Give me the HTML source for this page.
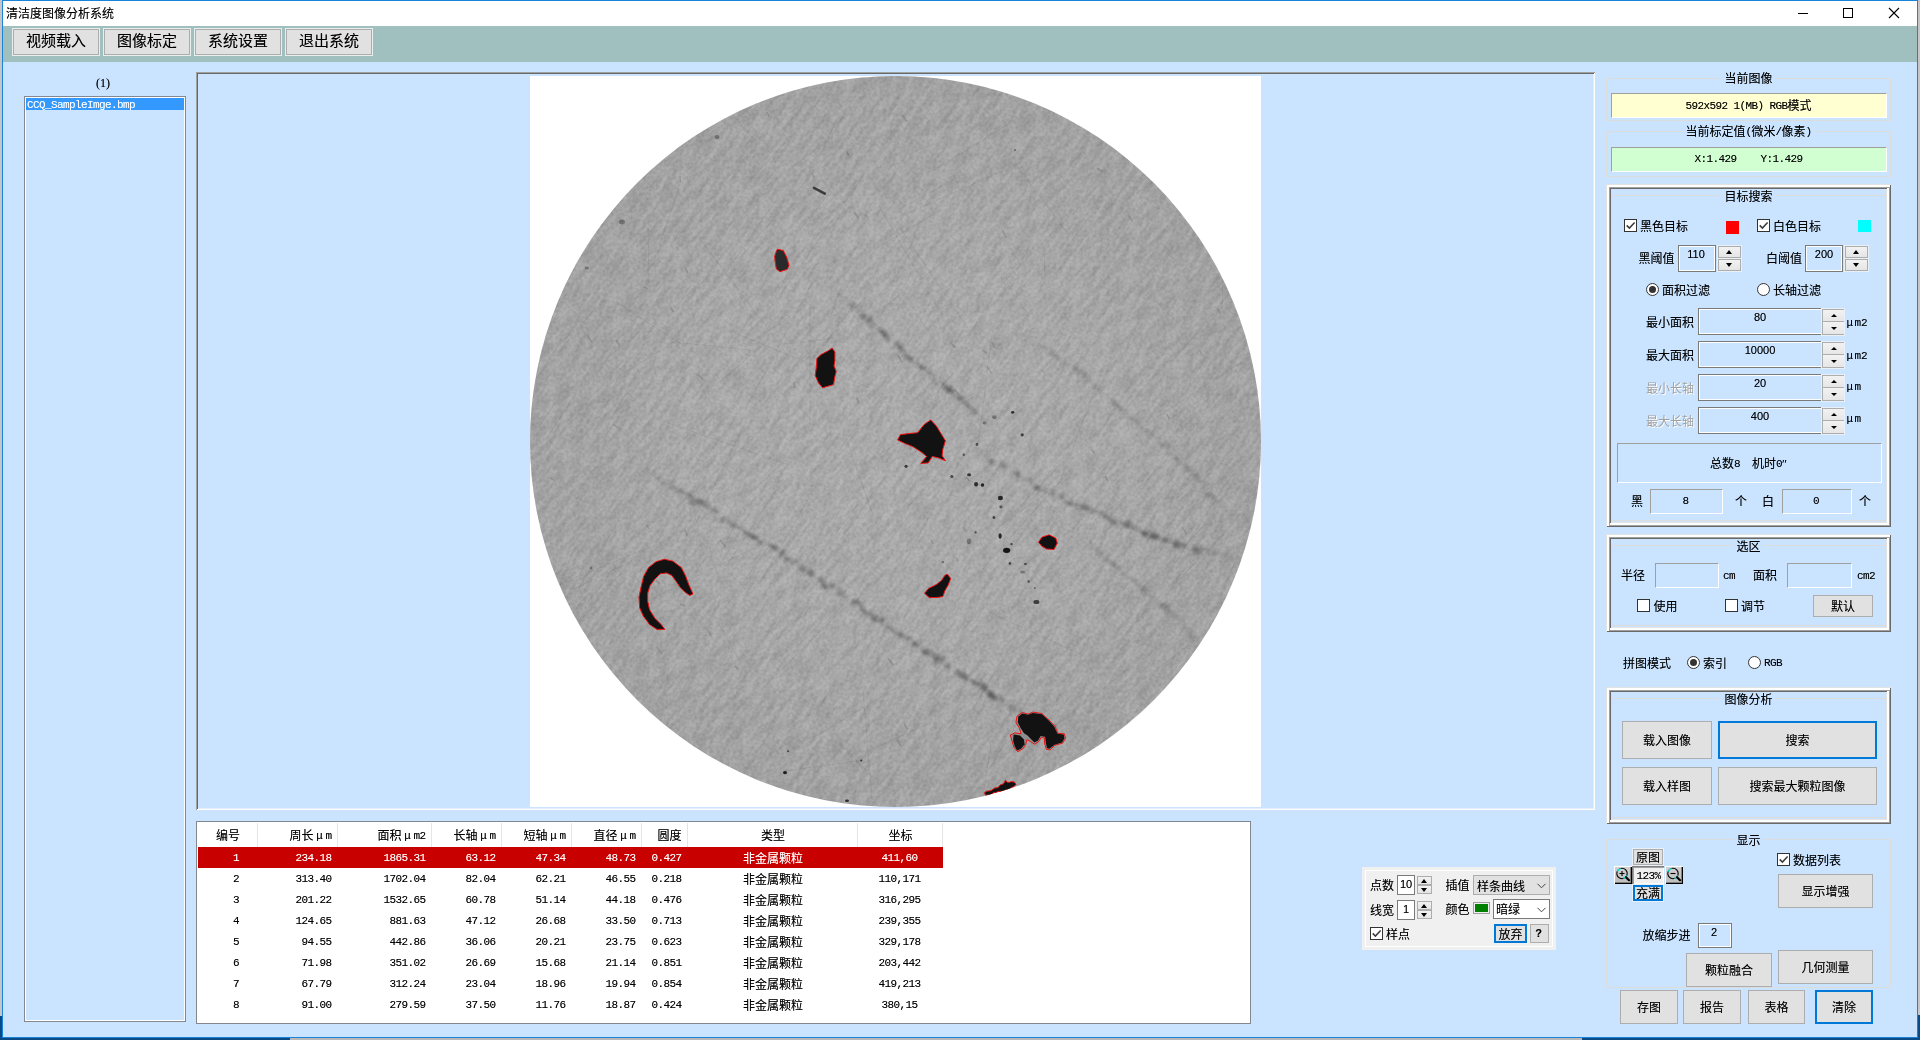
<!DOCTYPE html><html lang="zh"><head><meta charset="utf-8"><title>清洁度图像分析系统</title><style>
html,body{margin:0;padding:0}
body{width:1920px;height:1040px;overflow:hidden;position:relative;background:#cae4ff;
 font-family:"Liberation Serif","Noto Sans CJK SC",serif;font-size:12px;color:#000;text-shadow:0 0 0 rgba(0,0,0,.45)}
div{position:absolute;box-sizing:border-box}
svg{position:absolute;overflow:visible}
.t{white-space:nowrap}
.m{font-family:"Liberation Mono","Noto Sans CJK SC",monospace;font-size:11px;letter-spacing:-0.6px}
.s{font-family:"Liberation Sans","Noto Sans CJK SC",sans-serif;font-size:11px}
span.m,span.s{position:relative;top:-1px}
.w{color:#fff;text-shadow:0 0 0 rgba(255,255,255,.45)}
.dis{color:#a0a0a0;text-shadow:1px 1px 0 #fff}
.btn{background:#e1e1e1;border:1px solid #adadad}
.btnf{background:#e1e1e1;border:2px solid #0078d7}
.tb{background:#e1e1e1;border:1px solid #adadad;box-shadow:0 0 0 1px #e9efef}
.edit{border:1px solid #7a7a7a;box-shadow:inset 0 0 0 1px #fff}
.sunk{border:1px solid;border-color:#a0a0a0 #fff #fff #a0a0a0}
.gb{border:1px solid #dcdcdc}
.cap{background:#cae4ff}
.bevel{box-shadow:inset 1px 1px 0 0 #e3e3e3,inset -1px -1px 0 0 #696969,inset 3px 3px 0 0 #fff,inset -2px -2px 0 0 #a0a0a0,inset 4px 4px 0 0 #a0a0a0,inset -4px -4px 0 0 #fff,inset 5px 5px 0 0 #696969,inset -5px -5px 0 0 #e3e3e3}
.cb{width:13px;height:13px;background:#fff;border:1px solid #333}
.rb{width:13px;height:13px;background:#fff;border:1px solid #333;border-radius:50%}
.rb.on:after{content:"";position:absolute;left:2px;top:2px;width:7px;height:7px;border-radius:50%;background:#333}
.sp{background:linear-gradient(#f2f2f2,#e5e5e5);border:1px solid #adadad;box-shadow:0 0 0 1px #e8f0f8}
.au:after{content:"";position:absolute;left:50%;top:50%;margin:-2px 0 0 -3.5px;border-left:3.5px solid transparent;border-right:3.5px solid transparent;border-bottom:4px solid #000}
.ad:after{content:"";position:absolute;left:50%;top:50%;margin:-2px 0 0 -3.5px;border-left:3.5px solid transparent;border-right:3.5px solid transparent;border-top:4px solid #000}

.sf{border:1px solid #adadad;border-right:none;box-shadow:0 0 0 1px #e8f0f8;background:#adadad}
.sh{background:linear-gradient(#f2f2f2,#e6e6e6);left:0;width:100%}
.au2:after{content:"";position:absolute;left:50%;top:50%;margin:-2px 0 0 -3px;border-left:3px solid transparent;border-right:3px solid transparent;border-bottom:3px solid #000}
.ad2:after{content:"";position:absolute;left:50%;top:50%;margin:-1px 0 0 -3px;border-left:3px solid transparent;border-right:3px solid transparent;border-top:3px solid #000}
</style></head><body><div style="left:0;top:0;width:1920px;height:1040px;will-change:transform">
<div class="" style="left:0px;top:0px;width:1920px;height:1040px;background:#0a4a86"></div>
<div class="" style="left:0px;top:0px;width:2px;height:1016px;background:#c8c4c8"></div>
<div class="" style="left:1918px;top:0px;width:2px;height:1015px;background:#c8c4c8"></div>
<div class="" style="left:290px;top:1038px;width:1292px;height:2px;background:#b9b9b9"></div>
<div class="" style="left:2px;top:0px;width:1916px;height:1038px;background:#1883d7"></div>
<div class="" style="left:3px;top:1px;width:1914px;height:1036px;background:#cae4ff"></div>
<div class="" style="left:3px;top:1px;width:1914px;height:25px;background:#fff"></div>
<div class="t " style="left:6px;top:6px;line-height:16px;height:16px;">清洁度图像分析系统</div>
<svg width="120" height="26" viewBox="0 0 120 26" style="left:1790px;top:0"><path d="M8 13.5H18" stroke="#000" stroke-width="1" fill="none"/><rect x="53.5" y="8.5" width="9" height="9" fill="none" stroke="#000"/><path d="M99 8L109 18M109 8L99 18" stroke="#000" stroke-width="1.1" fill="none"/></svg>
<div class="" style="left:3px;top:26px;width:1914px;height:36px;background:#a0bfbf"></div>
<div class="tb" style="left:13px;top:29px;width:86px;height:26px;"></div>
<div class="t " style="left:13px;width:86px;text-align:center;top:31px;line-height:20px;height:20px;font-size:15px">视频载入</div>
<div class="tb" style="left:104px;top:29px;width:86px;height:26px;"></div>
<div class="t " style="left:104px;width:86px;text-align:center;top:31px;line-height:20px;height:20px;font-size:15px">图像标定</div>
<div class="tb" style="left:195px;top:29px;width:86px;height:26px;"></div>
<div class="t " style="left:195px;width:86px;text-align:center;top:31px;line-height:20px;height:20px;font-size:15px">系统设置</div>
<div class="tb" style="left:286px;top:29px;width:86px;height:26px;"></div>
<div class="t " style="left:286px;width:86px;text-align:center;top:31px;line-height:20px;height:20px;font-size:15px">退出系统</div>
<div class="t l" style="left:73px;width:60px;text-align:center;top:75px;line-height:16px;height:16px;">(1)</div>
<div class="" style="left:24px;top:96px;width:162px;height:926px;border:1px solid #828790;box-shadow:inset 0 0 0 1px #fff"></div>
<div class="" style="left:26px;top:98px;width:158px;height:12px;background:#3399ff"></div>
<div class="t m w" style="left:27px;top:97px;line-height:16px;height:16px;">CCQ_SampleImge.bmp</div>
<svg width="731" height="731" viewBox="530 76 731 731" style="left:530px;top:76px">
<defs><radialGradient id="rg" cx="0.5" cy="0.5" r="0.5"><stop offset="0" stop-color="#ababab"/><stop offset="0.6" stop-color="#a8a8a8"/><stop offset="1" stop-color="#a1a1a1"/></radialGradient><clipPath id="cc"><circle cx="895.5" cy="441.5" r="365.5"/></clipPath><filter id="nz" x="0" y="0" width="1" height="1" color-interpolation-filters="sRGB"><feTurbulence type="fractalNoise" baseFrequency="0.045 0.2" numOctaves="3" seed="3"/><feColorMatrix type="matrix" values="1.7 0 0 0 -0.20  1.7 0 0 0 -0.20  1.7 0 0 0 -0.20  0 0 0 0 1"/></filter><filter id="nz2" x="0" y="0" width="1" height="1" color-interpolation-filters="sRGB"><feTurbulence type="fractalNoise" baseFrequency="0.3" numOctaves="2" seed="8"/><feColorMatrix type="matrix" values="1.7 0 0 0 -0.20  1.7 0 0 0 -0.20  1.7 0 0 0 -0.20  0 0 0 0 1"/></filter><filter id="bl" x="-0.2" y="-0.2" width="1.4" height="1.4"><feGaussianBlur stdDeviation="1.6"/></filter><filter id="b1" x="-0.5" y="-0.5" width="2" height="2"><feGaussianBlur stdDeviation="0.6"/></filter></defs>
<rect x="530" y="76" width="731" height="731" fill="#fff"/>
<circle cx="895.5" cy="441.5" r="365.5" fill="url(#rg)"/>
<g clip-path="url(#cc)">
<rect x="530" y="76" width="731" height="731" filter="url(#nz)" fill="#000" opacity=".085" transform="rotate(-55 895.5 441.5)"/>
<rect x="530" y="76" width="731" height="731" filter="url(#nz2)" fill="#000" opacity=".07"/>
<path d="M767 186l59 -44M572 447l59 -57M581 142l38 -43M989 769l41 -66M1244 110l29 37M616 302l84 54M997 348l37 -40M1027 389l64 -77M861 295l-35 48M950 460l-43 48M1247 162l55 -70M559 564l-31 132M759 584l50 -86M863 690l9 109M574 589l58 -28M812 565l51 -68M653 162l37 -47M816 713l43 -72M932 722l-58 26M834 338l-48 6M659 246l20 -58M533 382l63 -75M1227 581l14 -34M1188 646l-62 46M822 152l15 -34M579 229l17 -24M641 150l22 -25M1169 525l45 -58M620 697l9 88M593 151l48 -39M1136 194l39 -28M927 96l80 -124M1161 585l66 -104M919 645l40 -41M1123 796l-105 73M1071 242l20 -27M734 265l94 -110M857 761l-73 10M691 242l95 -100M1144 426l105 -69M592 559l-93 76M879 206l63 109M1240 365l43 -26M623 186l-39 27M1134 793l37 -62M931 172l79 -49M1212 393l-47 29M714 290l57 -83M720 382l64 -56M956 737l72 -120M897 465l41 -31M533 660l56 -67M1060 483l43 -116M608 486l37 -51M1095 447l53 -64M978 446l14 -112M861 466l115 -71M1219 266l72 -124M1144 176l32 -49M583 565l-46 15M1053 559l87 -104M1237 237l28 84M1254 685l27 -65M673 309l23 -23M935 398l44 -80M577 796l-42 4M724 105l30 34M839 742l33 35M1202 493l33 -23M572 579l98 -40M1116 137l131 28M862 324l112 -86M726 170l31 -39M567 223l47 -47M1085 288l22 -23M713 87l73 -62M668 423l121 42M846 438l30 86M1033 794l80 -70M826 330l15 -43M582 618l86 -99M1166 566l40 -43M744 412l68 -129M1241 476l97 -109M756 337l40 -81M677 445l46 -41M596 368l44 -37M958 463l-55 102M1173 361l95 -114M639 605l123 -61M989 612l84 39M899 686l-86 52M1183 575l41 -41M553 173l83 -50M989 534l72 -52M532 659l39 -102M578 615l24 -31M724 609l52 -73M810 426l-0 -122M981 546l83 -85M753 491l27 -26M726 567l50 -77M870 417l64 -122M676 791l85 5M1129 784l86 -115M684 501l69 -63M1226 173l-4 136M1044 245l1 33M533 435l41 -58M761 690l85 -84M1143 164l-86 108M742 348l61 -40M843 277l26 -33M1140 285l44 44M904 215l116 -52M991 744l-18 115M566 611l60 -104M1001 285l61 -62M781 294l84 -121M720 556l21 -45M648 228l1 56M1192 804l26 -39M671 142l44 -42M946 725l55 -58M833 459l37 -52M1237 168l71 -78M1161 234l52 -66M1227 696l34 2M1049 731l79 -62M530 362l-113 69M1241 258l83 -75M1218 604l96 -75M864 479l90 -107M1002 298l28 -53M995 587l80 -60M814 239l22 -22M750 413l-60 122M877 248l57 -34M546 440l43 -68M718 564l26 22M777 383l85 -82M899 226l72 107M699 238l87 115M892 213l70 -38M1016 770l74 -127M634 114l54 -56M1187 722l65 -23M666 760l21 -27M1016 353l17 -25M735 333l135 55M682 337l-69 43M566 422l100 -98M671 342l79 8M1123 636l96 -103M718 622l30 55M1230 527l73 -90M761 277l67 -82M1220 94l10 -86M1229 773l55 -70M1208 210l-88 94M1095 520l54 -41M795 648l43 -42M577 101l60 -34M1247 722l27 30M600 440l38 -70M983 569l87 -99M1016 165l59 78M803 616l30 -38M1176 499l58 -51M1255 447l106 -105" stroke="#000" stroke-opacity=".06" stroke-width="1" fill="none"/>
<path d="M613 424l6.3 5.1M1137 736l2.0 4.2M675 778l3.7 5.8M1200 351l2.3 4.8M1092 758l3.2 3.2M963 527l2.5 4.0M685 267l2.8 6.4M1003 231l3.0 6.7M671 308l2.8 4.1M1105 476l3.0 5.2M931 540l2.4 3.7M656 580l3.8 4.0M1217 308l3.4 5.9M794 382l0.8 5.8M680 604l4.6 2.1M544 727l4.9 3.5M1167 414l2.0 4.4M551 478l3.5 2.8M982 350l5.4 3.7M644 287l4.0 2.1M888 658l5.5 6.9M680 176l0.5 6.4M578 745l4.3 4.1M1182 527l4.2 6.7M698 374l5.4 6.2M1129 216l3.5 5.6M812 173l2.1 4.8M1055 724l2.7 7.3M567 682l2.4 3.9M966 477l4.1 4.5M954 389l4.9 5.4M857 398l2.0 6.1M707 629l4.3 6.7M865 214l3.0 3.5M846 151l3.5 5.1M902 115l4.7 6.0M1092 450l2.7 3.3M898 355l4.0 7.3M1247 607l4.9 6.5M678 784l7.8 3.6M657 647l4.8 7.2M587 335l4.8 7.0M735 666l3.2 3.5M897 740l3.5 5.5M767 112l2.1 4.4M654 752l3.5 3.4M1097 168l5.6 3.5M992 342l2.8 6.3M1167 160l6.4 6.2M987 366l4.8 7.6M950 342l5.4 5.6M854 212l4.7 6.6M720 540l5.6 7.0M956 558l2.4 3.4M646 524l3.5 5.1M904 723l3.5 6.3M556 88l2.8 5.1M616 340l3.7 5.9M685 530l2.1 6.0M636 752l2.6 3.7" stroke="#000" stroke-opacity=".13" stroke-width="1.6" fill="none"/>
<g filter="url(#bl)" fill="#000">
<ellipse cx="839.2" cy="294.8" rx="2.8" ry="1.8" fill-opacity="0.04" transform="rotate(42 839.2 294.8)"/>
<ellipse cx="840.5" cy="295.4" rx="3.3" ry="3.7" fill-opacity="0.09" transform="rotate(42 840.5 295.4)"/>
<ellipse cx="845.9" cy="300.3" rx="3.6" ry="2.6" fill-opacity="0.04" transform="rotate(42 845.9 300.3)"/>
<ellipse cx="851.3" cy="304.2" rx="3.7" ry="3.7" fill-opacity="0.04" transform="rotate(42 851.3 304.2)"/>
<ellipse cx="852.6" cy="305.6" rx="3.9" ry="3.5" fill-opacity="0.14" transform="rotate(42 852.6 305.6)"/>
<ellipse cx="857.5" cy="308.1" rx="4.7" ry="3.4" fill-opacity="0.06" transform="rotate(42 857.5 308.1)"/>
<ellipse cx="862.6" cy="316.4" rx="3.4" ry="3.3" fill-opacity="0.23" transform="rotate(42 862.6 316.4)"/>
<ellipse cx="864.4" cy="316.3" rx="2.1" ry="2.5" fill-opacity="0.11" transform="rotate(42 864.4 316.3)"/>
<ellipse cx="869.9" cy="319.7" rx="2.8" ry="2.9" fill-opacity="0.22" transform="rotate(42 869.9 319.7)"/>
<ellipse cx="869.3" cy="323.3" rx="3.9" ry="3.8" fill-opacity="0.11" transform="rotate(42 869.3 323.3)"/>
<ellipse cx="873.2" cy="325.8" rx="2.7" ry="3.3" fill-opacity="0.11" transform="rotate(42 873.2 325.8)"/>
<ellipse cx="881.2" cy="331.4" rx="3.0" ry="2.3" fill-opacity="0.26" transform="rotate(42 881.2 331.4)"/>
<ellipse cx="883.8" cy="333.2" rx="4.9" ry="2.7" fill-opacity="0.21" transform="rotate(42 883.8 333.2)"/>
<ellipse cx="887.0" cy="336.9" rx="4.2" ry="2.9" fill-opacity="0.16" transform="rotate(42 887.0 336.9)"/>
<ellipse cx="887.7" cy="339.9" rx="4.7" ry="2.1" fill-opacity="0.07" transform="rotate(42 887.7 339.9)"/>
<ellipse cx="895.0" cy="344.4" rx="2.4" ry="1.8" fill-opacity="0.13" transform="rotate(42 895.0 344.4)"/>
<ellipse cx="898.9" cy="344.6" rx="4.2" ry="1.9" fill-opacity="0.22" transform="rotate(42 898.9 344.6)"/>
<ellipse cx="901.0" cy="348.8" rx="4.7" ry="1.9" fill-opacity="0.25" transform="rotate(41 901.0 348.8)"/>
<ellipse cx="909.8" cy="357.6" rx="2.6" ry="2.0" fill-opacity="0.08" transform="rotate(41 909.8 357.6)"/>
<ellipse cx="906.7" cy="356.7" rx="4.5" ry="3.1" fill-opacity="0.20" transform="rotate(41 906.7 356.7)"/>
<ellipse cx="911.2" cy="359.9" rx="2.6" ry="2.4" fill-opacity="0.23" transform="rotate(41 911.2 359.9)"/>
<ellipse cx="918.1" cy="364.2" rx="4.1" ry="2.5" fill-opacity="0.12" transform="rotate(41 918.1 364.2)"/>
<ellipse cx="921.3" cy="367.7" rx="3.9" ry="1.8" fill-opacity="0.25" transform="rotate(41 921.3 367.7)"/>
<ellipse cx="925.0" cy="367.5" rx="4.1" ry="2.9" fill-opacity="0.13" transform="rotate(41 925.0 367.5)"/>
<ellipse cx="929.4" cy="372.8" rx="2.5" ry="1.8" fill-opacity="0.25" transform="rotate(41 929.4 372.8)"/>
<ellipse cx="931.8" cy="375.9" rx="3.5" ry="2.8" fill-opacity="0.05" transform="rotate(41 931.8 375.9)"/>
<ellipse cx="934.6" cy="381.6" rx="4.5" ry="2.3" fill-opacity="0.13" transform="rotate(41 934.6 381.6)"/>
<ellipse cx="944.4" cy="384.5" rx="3.5" ry="2.0" fill-opacity="0.22" transform="rotate(41 944.4 384.5)"/>
<ellipse cx="946.5" cy="389.1" rx="4.4" ry="3.1" fill-opacity="0.22" transform="rotate(41 946.5 389.1)"/>
<ellipse cx="949.6" cy="388.2" rx="2.3" ry="3.6" fill-opacity="0.26" transform="rotate(41 949.6 388.2)"/>
<ellipse cx="951.8" cy="391.9" rx="3.5" ry="2.5" fill-opacity="0.27" transform="rotate(41 951.8 391.9)"/>
<ellipse cx="959.2" cy="397.9" rx="4.3" ry="3.3" fill-opacity="0.18" transform="rotate(41 959.2 397.9)"/>
<ellipse cx="962.6" cy="399.5" rx="4.5" ry="3.1" fill-opacity="0.09" transform="rotate(41 962.6 399.5)"/>
<ellipse cx="966.4" cy="404.6" rx="3.7" ry="2.0" fill-opacity="0.24" transform="rotate(41 966.4 404.6)"/>
<ellipse cx="969.4" cy="407.0" rx="2.9" ry="3.2" fill-opacity="0.09" transform="rotate(41 969.4 407.0)"/>
<ellipse cx="972.6" cy="411.5" rx="3.0" ry="2.8" fill-opacity="0.08" transform="rotate(43 972.6 411.5)"/>
<ellipse cx="975.1" cy="411.7" rx="4.2" ry="2.0" fill-opacity="0.18" transform="rotate(43 975.1 411.7)"/>
<ellipse cx="981.9" cy="419.5" rx="4.4" ry="3.3" fill-opacity="0.10" transform="rotate(43 981.9 419.5)"/>
<ellipse cx="983.7" cy="420.7" rx="2.6" ry="2.6" fill-opacity="0.02" transform="rotate(43 983.7 420.7)"/>
<ellipse cx="977.0" cy="450.1" rx="3.5" ry="3.1" fill-opacity="0.04" transform="rotate(27 977.0 450.1)"/>
<ellipse cx="983.1" cy="456.5" rx="4.2" ry="3.7" fill-opacity="0.05" transform="rotate(27 983.1 456.5)"/>
<ellipse cx="987.4" cy="455.4" rx="2.7" ry="3.3" fill-opacity="0.06" transform="rotate(27 987.4 455.4)"/>
<ellipse cx="991.3" cy="461.3" rx="4.0" ry="3.1" fill-opacity="0.15" transform="rotate(29 991.3 461.3)"/>
<ellipse cx="992.7" cy="461.7" rx="3.3" ry="3.4" fill-opacity="0.05" transform="rotate(29 992.7 461.7)"/>
<ellipse cx="1002.2" cy="464.8" rx="3.4" ry="3.1" fill-opacity="0.11" transform="rotate(29 1002.2 464.8)"/>
<ellipse cx="1002.7" cy="465.8" rx="4.0" ry="3.4" fill-opacity="0.08" transform="rotate(29 1002.7 465.8)"/>
<ellipse cx="1004.9" cy="465.9" rx="3.6" ry="2.1" fill-opacity="0.06" transform="rotate(29 1004.9 465.9)"/>
<ellipse cx="1014.2" cy="474.6" rx="3.7" ry="2.9" fill-opacity="0.07" transform="rotate(29 1014.2 474.6)"/>
<ellipse cx="1017.4" cy="473.4" rx="3.6" ry="2.6" fill-opacity="0.23" transform="rotate(29 1017.4 473.4)"/>
<ellipse cx="1023.3" cy="478.9" rx="4.3" ry="2.0" fill-opacity="0.14" transform="rotate(29 1023.3 478.9)"/>
<ellipse cx="1030.1" cy="480.7" rx="3.2" ry="1.8" fill-opacity="0.11" transform="rotate(29 1030.1 480.7)"/>
<ellipse cx="1030.3" cy="480.1" rx="2.8" ry="2.2" fill-opacity="0.13" transform="rotate(29 1030.3 480.1)"/>
<ellipse cx="1036.8" cy="486.9" rx="4.4" ry="2.6" fill-opacity="0.10" transform="rotate(29 1036.8 486.9)"/>
<ellipse cx="1037.2" cy="488.1" rx="3.9" ry="2.7" fill-opacity="0.23" transform="rotate(29 1037.2 488.1)"/>
<ellipse cx="1045.5" cy="490.3" rx="3.9" ry="3.5" fill-opacity="0.13" transform="rotate(29 1045.5 490.3)"/>
<ellipse cx="1053.0" cy="491.4" rx="2.4" ry="3.5" fill-opacity="0.17" transform="rotate(24 1053.0 491.4)"/>
<ellipse cx="1052.2" cy="494.3" rx="2.8" ry="2.6" fill-opacity="0.13" transform="rotate(24 1052.2 494.3)"/>
<ellipse cx="1054.9" cy="497.6" rx="2.7" ry="2.4" fill-opacity="0.11" transform="rotate(24 1054.9 497.6)"/>
<ellipse cx="1061.8" cy="496.2" rx="3.1" ry="3.7" fill-opacity="0.20" transform="rotate(24 1061.8 496.2)"/>
<ellipse cx="1068.9" cy="503.3" rx="4.4" ry="2.0" fill-opacity="0.25" transform="rotate(24 1068.9 503.3)"/>
<ellipse cx="1073.5" cy="502.6" rx="4.9" ry="3.1" fill-opacity="0.05" transform="rotate(24 1073.5 502.6)"/>
<ellipse cx="1074.3" cy="504.3" rx="4.3" ry="2.5" fill-opacity="0.10" transform="rotate(24 1074.3 504.3)"/>
<ellipse cx="1079.1" cy="507.6" rx="4.7" ry="3.0" fill-opacity="0.09" transform="rotate(24 1079.1 507.6)"/>
<ellipse cx="1084.7" cy="507.4" rx="4.5" ry="2.2" fill-opacity="0.22" transform="rotate(24 1084.7 507.4)"/>
<ellipse cx="1087.8" cy="508.4" rx="4.6" ry="2.9" fill-opacity="0.15" transform="rotate(24 1087.8 508.4)"/>
<ellipse cx="1092.5" cy="512.0" rx="2.2" ry="2.7" fill-opacity="0.16" transform="rotate(24 1092.5 512.0)"/>
<ellipse cx="1097.8" cy="512.0" rx="4.6" ry="1.8" fill-opacity="0.17" transform="rotate(24 1097.8 512.0)"/>
<ellipse cx="1104.9" cy="515.4" rx="4.5" ry="2.5" fill-opacity="0.20" transform="rotate(24 1104.9 515.4)"/>
<ellipse cx="1107.9" cy="518.9" rx="3.9" ry="1.8" fill-opacity="0.19" transform="rotate(24 1107.9 518.9)"/>
<ellipse cx="1112.9" cy="519.4" rx="4.9" ry="2.8" fill-opacity="0.12" transform="rotate(24 1112.9 519.4)"/>
<ellipse cx="1114.1" cy="522.9" rx="3.9" ry="2.5" fill-opacity="0.21" transform="rotate(24 1114.1 522.9)"/>
<ellipse cx="1123.3" cy="523.9" rx="4.3" ry="2.2" fill-opacity="0.17" transform="rotate(19 1123.3 523.9)"/>
<ellipse cx="1127.5" cy="524.3" rx="2.9" ry="3.5" fill-opacity="0.23" transform="rotate(19 1127.5 524.3)"/>
<ellipse cx="1131.7" cy="526.4" rx="4.9" ry="3.1" fill-opacity="0.16" transform="rotate(19 1131.7 526.4)"/>
<ellipse cx="1137.5" cy="529.2" rx="3.8" ry="3.1" fill-opacity="0.12" transform="rotate(19 1137.5 529.2)"/>
<ellipse cx="1143.3" cy="533.7" rx="3.6" ry="1.9" fill-opacity="0.25" transform="rotate(19 1143.3 533.7)"/>
<ellipse cx="1145.2" cy="533.2" rx="3.8" ry="3.1" fill-opacity="0.25" transform="rotate(19 1145.2 533.2)"/>
<ellipse cx="1151.8" cy="536.4" rx="3.9" ry="3.2" fill-opacity="0.19" transform="rotate(19 1151.8 536.4)"/>
<ellipse cx="1154.6" cy="535.8" rx="3.4" ry="3.4" fill-opacity="0.20" transform="rotate(19 1154.6 535.8)"/>
<ellipse cx="1157.1" cy="537.2" rx="4.7" ry="3.1" fill-opacity="0.22" transform="rotate(19 1157.1 537.2)"/>
<ellipse cx="1164.4" cy="540.2" rx="2.8" ry="2.4" fill-opacity="0.17" transform="rotate(19 1164.4 540.2)"/>
<ellipse cx="1166.8" cy="540.2" rx="4.8" ry="1.9" fill-opacity="0.19" transform="rotate(19 1166.8 540.2)"/>
<ellipse cx="1175.9" cy="543.5" rx="3.7" ry="3.7" fill-opacity="0.23" transform="rotate(19 1175.9 543.5)"/>
<ellipse cx="1178.9" cy="545.6" rx="4.8" ry="3.8" fill-opacity="0.18" transform="rotate(14 1178.9 545.6)"/>
<ellipse cx="1183.9" cy="544.9" rx="2.6" ry="2.1" fill-opacity="0.19" transform="rotate(14 1183.9 544.9)"/>
<ellipse cx="1186.7" cy="548.3" rx="4.9" ry="1.9" fill-opacity="0.08" transform="rotate(14 1186.7 548.3)"/>
<ellipse cx="1195.5" cy="548.7" rx="2.7" ry="3.3" fill-opacity="0.21" transform="rotate(14 1195.5 548.7)"/>
<ellipse cx="1197.2" cy="551.2" rx="4.6" ry="3.3" fill-opacity="0.21" transform="rotate(14 1197.2 551.2)"/>
<ellipse cx="1202.1" cy="548.5" rx="4.8" ry="2.3" fill-opacity="0.15" transform="rotate(14 1202.1 548.5)"/>
<ellipse cx="1208.9" cy="552.4" rx="4.0" ry="3.5" fill-opacity="0.04" transform="rotate(14 1208.9 552.4)"/>
<ellipse cx="1210.9" cy="551.7" rx="4.6" ry="2.8" fill-opacity="0.07" transform="rotate(14 1210.9 551.7)"/>
<ellipse cx="1218.0" cy="552.5" rx="4.0" ry="2.1" fill-opacity="0.11" transform="rotate(14 1218.0 552.5)"/>
<ellipse cx="1225.7" cy="554.6" rx="3.3" ry="2.6" fill-opacity="0.10" transform="rotate(14 1225.7 554.6)"/>
<ellipse cx="1230.7" cy="559.5" rx="2.9" ry="1.9" fill-opacity="0.08" transform="rotate(14 1230.7 559.5)"/>
<ellipse cx="1234.2" cy="557.9" rx="3.8" ry="3.8" fill-opacity="0.04" transform="rotate(14 1234.2 557.9)"/>
<ellipse cx="1236.7" cy="558.8" rx="4.7" ry="2.5" fill-opacity="0.03" transform="rotate(14 1236.7 558.8)"/>
<ellipse cx="647.3" cy="469.3" rx="2.8" ry="1.8" fill-opacity="0.06" transform="rotate(29 647.3 469.3)"/>
<ellipse cx="648.7" cy="471.5" rx="4.7" ry="1.8" fill-opacity="0.07" transform="rotate(29 648.7 471.5)"/>
<ellipse cx="658.3" cy="478.0" rx="2.8" ry="3.5" fill-opacity="0.07" transform="rotate(29 658.3 478.0)"/>
<ellipse cx="659.1" cy="478.1" rx="2.3" ry="2.9" fill-opacity="0.06" transform="rotate(29 659.1 478.1)"/>
<ellipse cx="663.2" cy="482.5" rx="2.7" ry="3.0" fill-opacity="0.14" transform="rotate(29 663.2 482.5)"/>
<ellipse cx="672.1" cy="483.0" rx="4.3" ry="3.4" fill-opacity="0.06" transform="rotate(29 672.1 483.0)"/>
<ellipse cx="673.5" cy="488.1" rx="2.7" ry="3.0" fill-opacity="0.14" transform="rotate(29 673.5 488.1)"/>
<ellipse cx="680.8" cy="490.9" rx="3.8" ry="2.1" fill-opacity="0.12" transform="rotate(32 680.8 490.9)"/>
<ellipse cx="679.6" cy="491.3" rx="3.7" ry="2.6" fill-opacity="0.10" transform="rotate(32 679.6 491.3)"/>
<ellipse cx="688.3" cy="494.2" rx="3.1" ry="2.0" fill-opacity="0.23" transform="rotate(32 688.3 494.2)"/>
<ellipse cx="691.4" cy="497.1" rx="3.0" ry="2.8" fill-opacity="0.17" transform="rotate(32 691.4 497.1)"/>
<ellipse cx="691.9" cy="502.2" rx="3.5" ry="2.9" fill-opacity="0.23" transform="rotate(32 691.9 502.2)"/>
<ellipse cx="698.9" cy="501.6" rx="4.3" ry="3.5" fill-opacity="0.27" transform="rotate(32 698.9 501.6)"/>
<ellipse cx="703.7" cy="505.9" rx="2.5" ry="1.9" fill-opacity="0.10" transform="rotate(32 703.7 505.9)"/>
<ellipse cx="705.9" cy="503.5" rx="4.8" ry="3.7" fill-opacity="0.16" transform="rotate(32 705.9 503.5)"/>
<ellipse cx="708.8" cy="507.7" rx="4.9" ry="2.3" fill-opacity="0.08" transform="rotate(32 708.8 507.7)"/>
<ellipse cx="715.4" cy="510.7" rx="3.2" ry="2.7" fill-opacity="0.21" transform="rotate(32 715.4 510.7)"/>
<ellipse cx="716.0" cy="518.8" rx="2.1" ry="2.3" fill-opacity="0.10" transform="rotate(32 716.0 518.8)"/>
<ellipse cx="722.8" cy="520.2" rx="2.1" ry="3.4" fill-opacity="0.25" transform="rotate(32 722.8 520.2)"/>
<ellipse cx="727.8" cy="519.0" rx="2.4" ry="3.3" fill-opacity="0.06" transform="rotate(32 727.8 519.0)"/>
<ellipse cx="731.5" cy="524.2" rx="4.3" ry="2.0" fill-opacity="0.19" transform="rotate(32 731.5 524.2)"/>
<ellipse cx="735.3" cy="525.7" rx="2.5" ry="2.3" fill-opacity="0.17" transform="rotate(32 735.3 525.7)"/>
<ellipse cx="740.5" cy="527.9" rx="2.6" ry="1.8" fill-opacity="0.22" transform="rotate(32 740.5 527.9)"/>
<ellipse cx="747.2" cy="533.4" rx="4.7" ry="2.0" fill-opacity="0.26" transform="rotate(32 747.2 533.4)"/>
<ellipse cx="752.8" cy="536.8" rx="3.9" ry="2.7" fill-opacity="0.25" transform="rotate(32 752.8 536.8)"/>
<ellipse cx="755.2" cy="537.3" rx="2.4" ry="2.2" fill-opacity="0.20" transform="rotate(32 755.2 537.3)"/>
<ellipse cx="755.0" cy="538.1" rx="4.6" ry="2.3" fill-opacity="0.09" transform="rotate(32 755.0 538.1)"/>
<ellipse cx="760.4" cy="542.8" rx="3.0" ry="2.1" fill-opacity="0.25" transform="rotate(32 760.4 542.8)"/>
<ellipse cx="767.6" cy="543.8" rx="4.9" ry="1.9" fill-opacity="0.08" transform="rotate(32 767.6 543.8)"/>
<ellipse cx="775.4" cy="548.4" rx="2.9" ry="2.3" fill-opacity="0.16" transform="rotate(32 775.4 548.4)"/>
<ellipse cx="773.1" cy="546.9" rx="4.8" ry="2.0" fill-opacity="0.29" transform="rotate(32 773.1 546.9)"/>
<ellipse cx="781.8" cy="553.0" rx="2.9" ry="3.8" fill-opacity="0.22" transform="rotate(32 781.8 553.0)"/>
<ellipse cx="781.4" cy="555.0" rx="2.0" ry="3.5" fill-opacity="0.08" transform="rotate(32 781.4 555.0)"/>
<ellipse cx="786.9" cy="559.3" rx="2.7" ry="2.9" fill-opacity="0.27" transform="rotate(32 786.9 559.3)"/>
<ellipse cx="792.0" cy="561.3" rx="2.6" ry="1.9" fill-opacity="0.22" transform="rotate(32 792.0 561.3)"/>
<ellipse cx="796.8" cy="561.6" rx="2.6" ry="3.0" fill-opacity="0.12" transform="rotate(32 796.8 561.6)"/>
<ellipse cx="800.5" cy="567.9" rx="2.2" ry="3.3" fill-opacity="0.10" transform="rotate(32 800.5 567.9)"/>
<ellipse cx="802.8" cy="569.0" rx="3.0" ry="3.5" fill-opacity="0.24" transform="rotate(32 802.8 569.0)"/>
<ellipse cx="810.2" cy="572.8" rx="3.4" ry="3.6" fill-opacity="0.27" transform="rotate(32 810.2 572.8)"/>
<ellipse cx="812.4" cy="575.2" rx="2.5" ry="2.5" fill-opacity="0.14" transform="rotate(32 812.4 575.2)"/>
<ellipse cx="820.4" cy="579.4" rx="3.5" ry="2.0" fill-opacity="0.16" transform="rotate(32 820.4 579.4)"/>
<ellipse cx="822.8" cy="581.9" rx="4.1" ry="2.6" fill-opacity="0.13" transform="rotate(32 822.8 581.9)"/>
<ellipse cx="824.6" cy="586.2" rx="3.5" ry="2.8" fill-opacity="0.28" transform="rotate(32 824.6 586.2)"/>
<ellipse cx="831.5" cy="585.4" rx="2.7" ry="2.1" fill-opacity="0.28" transform="rotate(32 831.5 585.4)"/>
<ellipse cx="832.7" cy="587.2" rx="2.3" ry="3.2" fill-opacity="0.06" transform="rotate(35 832.7 587.2)"/>
<ellipse cx="839.9" cy="592.3" rx="3.6" ry="3.2" fill-opacity="0.19" transform="rotate(35 839.9 592.3)"/>
<ellipse cx="841.3" cy="594.5" rx="2.4" ry="2.8" fill-opacity="0.06" transform="rotate(35 841.3 594.5)"/>
<ellipse cx="845.2" cy="596.8" rx="2.4" ry="3.0" fill-opacity="0.15" transform="rotate(35 845.2 596.8)"/>
<ellipse cx="853.2" cy="601.9" rx="2.5" ry="3.5" fill-opacity="0.23" transform="rotate(35 853.2 601.9)"/>
<ellipse cx="858.4" cy="602.8" rx="3.6" ry="2.6" fill-opacity="0.25" transform="rotate(35 858.4 602.8)"/>
<ellipse cx="862.0" cy="607.0" rx="3.0" ry="2.7" fill-opacity="0.11" transform="rotate(35 862.0 607.0)"/>
<ellipse cx="864.1" cy="610.8" rx="4.5" ry="1.9" fill-opacity="0.24" transform="rotate(35 864.1 610.8)"/>
<ellipse cx="864.6" cy="614.5" rx="3.3" ry="3.1" fill-opacity="0.11" transform="rotate(35 864.6 614.5)"/>
<ellipse cx="870.2" cy="613.2" rx="3.5" ry="1.8" fill-opacity="0.15" transform="rotate(35 870.2 613.2)"/>
<ellipse cx="874.1" cy="618.3" rx="3.9" ry="3.4" fill-opacity="0.27" transform="rotate(35 874.1 618.3)"/>
<ellipse cx="881.0" cy="621.2" rx="2.8" ry="3.2" fill-opacity="0.20" transform="rotate(35 881.0 621.2)"/>
<ellipse cx="882.8" cy="619.0" rx="2.8" ry="2.8" fill-opacity="0.20" transform="rotate(35 882.8 619.0)"/>
<ellipse cx="887.0" cy="626.4" rx="3.9" ry="2.0" fill-opacity="0.12" transform="rotate(35 887.0 626.4)"/>
<ellipse cx="892.3" cy="630.3" rx="3.4" ry="2.9" fill-opacity="0.11" transform="rotate(35 892.3 630.3)"/>
<ellipse cx="894.5" cy="630.8" rx="3.2" ry="2.4" fill-opacity="0.12" transform="rotate(35 894.5 630.8)"/>
<ellipse cx="900.0" cy="634.9" rx="3.8" ry="2.9" fill-opacity="0.25" transform="rotate(35 900.0 634.9)"/>
<ellipse cx="906.2" cy="638.1" rx="3.6" ry="3.0" fill-opacity="0.16" transform="rotate(35 906.2 638.1)"/>
<ellipse cx="910.7" cy="639.4" rx="3.5" ry="2.6" fill-opacity="0.10" transform="rotate(35 910.7 639.4)"/>
<ellipse cx="914.2" cy="644.2" rx="2.7" ry="2.9" fill-opacity="0.26" transform="rotate(35 914.2 644.2)"/>
<ellipse cx="917.1" cy="644.6" rx="4.3" ry="2.1" fill-opacity="0.12" transform="rotate(35 917.1 644.6)"/>
<ellipse cx="923.4" cy="648.2" rx="3.2" ry="2.7" fill-opacity="0.07" transform="rotate(35 923.4 648.2)"/>
<ellipse cx="925.2" cy="652.7" rx="4.2" ry="2.1" fill-opacity="0.28" transform="rotate(35 925.2 652.7)"/>
<ellipse cx="929.4" cy="652.4" rx="4.5" ry="3.5" fill-opacity="0.20" transform="rotate(35 929.4 652.4)"/>
<ellipse cx="935.3" cy="656.9" rx="3.4" ry="3.4" fill-opacity="0.23" transform="rotate(35 935.3 656.9)"/>
<ellipse cx="936.2" cy="661.1" rx="2.0" ry="3.4" fill-opacity="0.26" transform="rotate(35 936.2 661.1)"/>
<ellipse cx="941.8" cy="659.4" rx="3.3" ry="3.4" fill-opacity="0.19" transform="rotate(35 941.8 659.4)"/>
<ellipse cx="947.5" cy="665.6" rx="3.4" ry="3.3" fill-opacity="0.16" transform="rotate(35 947.5 665.6)"/>
<ellipse cx="948.4" cy="666.4" rx="3.0" ry="3.4" fill-opacity="0.14" transform="rotate(33 948.4 666.4)"/>
<ellipse cx="956.9" cy="670.5" rx="2.9" ry="2.1" fill-opacity="0.09" transform="rotate(33 956.9 670.5)"/>
<ellipse cx="958.9" cy="673.4" rx="3.0" ry="3.5" fill-opacity="0.27" transform="rotate(33 958.9 673.4)"/>
<ellipse cx="963.9" cy="678.3" rx="4.7" ry="1.8" fill-opacity="0.15" transform="rotate(33 963.9 678.3)"/>
<ellipse cx="964.9" cy="676.4" rx="4.3" ry="2.9" fill-opacity="0.27" transform="rotate(33 964.9 676.4)"/>
<ellipse cx="972.7" cy="681.5" rx="3.2" ry="2.5" fill-opacity="0.21" transform="rotate(33 972.7 681.5)"/>
<ellipse cx="975.7" cy="682.8" rx="3.6" ry="2.0" fill-opacity="0.21" transform="rotate(33 975.7 682.8)"/>
<ellipse cx="981.9" cy="685.4" rx="4.6" ry="3.8" fill-opacity="0.19" transform="rotate(33 981.9 685.4)"/>
<ellipse cx="985.0" cy="688.1" rx="3.0" ry="2.9" fill-opacity="0.29" transform="rotate(33 985.0 688.1)"/>
<ellipse cx="990.3" cy="694.1" rx="4.5" ry="2.8" fill-opacity="0.28" transform="rotate(33 990.3 694.1)"/>
<ellipse cx="991.9" cy="696.0" rx="5.0" ry="3.6" fill-opacity="0.24" transform="rotate(33 991.9 696.0)"/>
<ellipse cx="995.0" cy="698.5" rx="3.5" ry="2.1" fill-opacity="0.15" transform="rotate(33 995.0 698.5)"/>
<ellipse cx="1000.5" cy="698.6" rx="5.0" ry="3.1" fill-opacity="0.11" transform="rotate(33 1000.5 698.6)"/>
<ellipse cx="1001.8" cy="700.1" rx="4.1" ry="1.8" fill-opacity="0.10" transform="rotate(33 1001.8 700.1)"/>
<ellipse cx="1009.8" cy="706.6" rx="2.6" ry="2.8" fill-opacity="0.15" transform="rotate(33 1009.8 706.6)"/>
<ellipse cx="1012.3" cy="708.8" rx="5.0" ry="3.0" fill-opacity="0.11" transform="rotate(33 1012.3 708.8)"/>
<ellipse cx="1019.4" cy="711.9" rx="2.3" ry="2.0" fill-opacity="0.13" transform="rotate(36 1019.4 711.9)"/>
<ellipse cx="1021.1" cy="711.0" rx="4.4" ry="1.9" fill-opacity="0.10" transform="rotate(36 1021.1 711.0)"/>
<ellipse cx="1023.5" cy="716.3" rx="3.1" ry="2.1" fill-opacity="0.10" transform="rotate(36 1023.5 716.3)"/>
<ellipse cx="1027.7" cy="722.3" rx="3.0" ry="2.7" fill-opacity="0.07" transform="rotate(36 1027.7 722.3)"/>
<ellipse cx="1035.3" cy="726.0" rx="4.9" ry="2.7" fill-opacity="0.06" transform="rotate(36 1035.3 726.0)"/>
<ellipse cx="1039.5" cy="726.9" rx="4.6" ry="2.4" fill-opacity="0.06" transform="rotate(36 1039.5 726.9)"/>
<ellipse cx="1014.3" cy="332.9" rx="4.9" ry="2.4" fill-opacity="0.03" transform="rotate(32 1014.3 332.9)"/>
<ellipse cx="1017.2" cy="335.2" rx="2.7" ry="2.1" fill-opacity="0.05" transform="rotate(32 1017.2 335.2)"/>
<ellipse cx="1023.7" cy="335.1" rx="2.5" ry="2.1" fill-opacity="0.03" transform="rotate(32 1023.7 335.1)"/>
<ellipse cx="1023.8" cy="339.6" rx="2.3" ry="2.5" fill-opacity="0.05" transform="rotate(32 1023.8 339.6)"/>
<ellipse cx="1028.5" cy="341.2" rx="4.5" ry="2.1" fill-opacity="0.03" transform="rotate(32 1028.5 341.2)"/>
<ellipse cx="1032.7" cy="344.3" rx="2.1" ry="2.7" fill-opacity="0.04" transform="rotate(32 1032.7 344.3)"/>
<ellipse cx="1038.1" cy="348.0" rx="2.8" ry="3.0" fill-opacity="0.03" transform="rotate(32 1038.1 348.0)"/>
<ellipse cx="1042.2" cy="346.3" rx="2.5" ry="2.1" fill-opacity="0.12" transform="rotate(32 1042.2 346.3)"/>
<ellipse cx="1048.2" cy="350.5" rx="4.9" ry="2.4" fill-opacity="0.05" transform="rotate(32 1048.2 350.5)"/>
<ellipse cx="1051.9" cy="353.7" rx="2.8" ry="3.1" fill-opacity="0.12" transform="rotate(32 1051.9 353.7)"/>
<ellipse cx="1055.4" cy="357.2" rx="2.6" ry="3.1" fill-opacity="0.10" transform="rotate(31 1055.4 357.2)"/>
<ellipse cx="1058.3" cy="357.6" rx="4.3" ry="2.2" fill-opacity="0.06" transform="rotate(31 1058.3 357.6)"/>
<ellipse cx="1064.0" cy="362.2" rx="2.3" ry="1.8" fill-opacity="0.08" transform="rotate(31 1064.0 362.2)"/>
<ellipse cx="1068.8" cy="365.5" rx="3.7" ry="2.2" fill-opacity="0.04" transform="rotate(31 1068.8 365.5)"/>
<ellipse cx="1073.9" cy="367.9" rx="2.7" ry="1.7" fill-opacity="0.07" transform="rotate(31 1073.9 367.9)"/>
<ellipse cx="1077.8" cy="370.9" rx="4.3" ry="3.1" fill-opacity="0.14" transform="rotate(31 1077.8 370.9)"/>
<ellipse cx="1083.6" cy="374.9" rx="4.0" ry="2.7" fill-opacity="0.03" transform="rotate(42 1083.6 374.9)"/>
<ellipse cx="1084.9" cy="374.1" rx="2.7" ry="3.0" fill-opacity="0.12" transform="rotate(42 1084.9 374.1)"/>
<ellipse cx="1088.9" cy="378.6" rx="4.7" ry="2.8" fill-opacity="0.04" transform="rotate(42 1088.9 378.6)"/>
<ellipse cx="1092.2" cy="384.1" rx="2.6" ry="2.0" fill-opacity="0.05" transform="rotate(42 1092.2 384.1)"/>
<ellipse cx="1095.5" cy="387.1" rx="2.5" ry="3.0" fill-opacity="0.11" transform="rotate(42 1095.5 387.1)"/>
<ellipse cx="1100.1" cy="389.7" rx="4.1" ry="2.1" fill-opacity="0.08" transform="rotate(42 1100.1 389.7)"/>
<ellipse cx="1100.4" cy="392.6" rx="2.1" ry="3.0" fill-opacity="0.06" transform="rotate(42 1100.4 392.6)"/>
<ellipse cx="1105.4" cy="397.8" rx="4.4" ry="1.9" fill-opacity="0.04" transform="rotate(42 1105.4 397.8)"/>
<ellipse cx="1112.6" cy="401.1" rx="3.2" ry="2.8" fill-opacity="0.11" transform="rotate(42 1112.6 401.1)"/>
<ellipse cx="1115.2" cy="404.1" rx="3.3" ry="3.2" fill-opacity="0.15" transform="rotate(42 1115.2 404.1)"/>
<ellipse cx="1119.6" cy="406.9" rx="3.4" ry="1.6" fill-opacity="0.11" transform="rotate(42 1119.6 406.9)"/>
<ellipse cx="1120.1" cy="409.0" rx="2.4" ry="2.9" fill-opacity="0.14" transform="rotate(42 1120.1 409.0)"/>
<ellipse cx="1124.8" cy="410.9" rx="3.6" ry="3.2" fill-opacity="0.06" transform="rotate(42 1124.8 410.9)"/>
<ellipse cx="1127.6" cy="415.9" rx="3.1" ry="2.2" fill-opacity="0.03" transform="rotate(42 1127.6 415.9)"/>
<ellipse cx="1131.8" cy="418.6" rx="4.0" ry="1.9" fill-opacity="0.12" transform="rotate(42 1131.8 418.6)"/>
<ellipse cx="1136.7" cy="420.8" rx="3.1" ry="2.0" fill-opacity="0.14" transform="rotate(42 1136.7 420.8)"/>
<ellipse cx="1142.2" cy="428.8" rx="4.4" ry="2.5" fill-opacity="0.07" transform="rotate(39 1142.2 428.8)"/>
<ellipse cx="1147.1" cy="431.4" rx="3.4" ry="2.9" fill-opacity="0.10" transform="rotate(39 1147.1 431.4)"/>
<ellipse cx="1151.8" cy="434.6" rx="2.6" ry="1.6" fill-opacity="0.07" transform="rotate(39 1151.8 434.6)"/>
<ellipse cx="1152.5" cy="435.9" rx="2.3" ry="2.1" fill-opacity="0.08" transform="rotate(39 1152.5 435.9)"/>
<ellipse cx="1158.4" cy="438.3" rx="2.0" ry="3.3" fill-opacity="0.04" transform="rotate(39 1158.4 438.3)"/>
<ellipse cx="1162.0" cy="444.8" rx="3.7" ry="1.7" fill-opacity="0.15" transform="rotate(39 1162.0 444.8)"/>
<ellipse cx="1165.4" cy="444.4" rx="2.0" ry="3.2" fill-opacity="0.10" transform="rotate(39 1165.4 444.4)"/>
<ellipse cx="1169.2" cy="446.6" rx="2.8" ry="1.9" fill-opacity="0.11" transform="rotate(39 1169.2 446.6)"/>
<ellipse cx="1168.2" cy="453.0" rx="2.9" ry="1.8" fill-opacity="0.13" transform="rotate(47 1168.2 453.0)"/>
<ellipse cx="1176.1" cy="457.9" rx="4.4" ry="3.0" fill-opacity="0.05" transform="rotate(47 1176.1 457.9)"/>
<ellipse cx="1176.8" cy="459.8" rx="3.0" ry="2.2" fill-opacity="0.13" transform="rotate(47 1176.8 459.8)"/>
<ellipse cx="1183.0" cy="461.3" rx="2.1" ry="2.5" fill-opacity="0.06" transform="rotate(47 1183.0 461.3)"/>
<ellipse cx="1187.9" cy="468.0" rx="4.8" ry="2.4" fill-opacity="0.14" transform="rotate(47 1187.9 468.0)"/>
<ellipse cx="1186.9" cy="470.9" rx="2.2" ry="2.7" fill-opacity="0.10" transform="rotate(47 1186.9 470.9)"/>
<ellipse cx="1192.2" cy="469.2" rx="2.1" ry="2.3" fill-opacity="0.04" transform="rotate(47 1192.2 469.2)"/>
<ellipse cx="1196.0" cy="476.5" rx="4.6" ry="2.9" fill-opacity="0.13" transform="rotate(47 1196.0 476.5)"/>
<ellipse cx="1198.9" cy="480.6" rx="3.3" ry="2.1" fill-opacity="0.09" transform="rotate(47 1198.9 480.6)"/>
<ellipse cx="1204.5" cy="483.4" rx="2.5" ry="2.0" fill-opacity="0.14" transform="rotate(47 1204.5 483.4)"/>
<ellipse cx="1203.6" cy="487.2" rx="2.3" ry="2.1" fill-opacity="0.05" transform="rotate(47 1203.6 487.2)"/>
<ellipse cx="1208.9" cy="495.1" rx="4.9" ry="3.2" fill-opacity="0.13" transform="rotate(47 1208.9 495.1)"/>
<ellipse cx="1212.8" cy="496.6" rx="3.8" ry="2.0" fill-opacity="0.10" transform="rotate(47 1212.8 496.6)"/>
<ellipse cx="1216.1" cy="501.4" rx="2.9" ry="2.1" fill-opacity="0.08" transform="rotate(47 1216.1 501.4)"/>
<ellipse cx="1220.6" cy="505.7" rx="3.3" ry="1.7" fill-opacity="0.07" transform="rotate(47 1220.6 505.7)"/>
<ellipse cx="1223.8" cy="506.4" rx="3.6" ry="2.5" fill-opacity="0.04" transform="rotate(47 1223.8 506.4)"/>
<ellipse cx="1227.5" cy="511.0" rx="3.6" ry="1.7" fill-opacity="0.06" transform="rotate(47 1227.5 511.0)"/>
<ellipse cx="1231.7" cy="515.8" rx="2.8" ry="2.4" fill-opacity="0.03" transform="rotate(47 1231.7 515.8)"/>
<ellipse cx="1234.1" cy="518.6" rx="3.5" ry="2.6" fill-opacity="0.01" transform="rotate(47 1234.1 518.6)"/>
<ellipse cx="1090.1" cy="543.8" rx="4.6" ry="2.5" fill-opacity="0.02" transform="rotate(39 1090.1 543.8)"/>
<ellipse cx="1095.0" cy="549.4" rx="4.2" ry="1.7" fill-opacity="0.08" transform="rotate(39 1095.0 549.4)"/>
<ellipse cx="1098.4" cy="552.2" rx="3.7" ry="2.9" fill-opacity="0.11" transform="rotate(39 1098.4 552.2)"/>
<ellipse cx="1100.8" cy="553.9" rx="3.1" ry="1.5" fill-opacity="0.05" transform="rotate(39 1100.8 553.9)"/>
<ellipse cx="1105.5" cy="558.6" rx="3.3" ry="3.1" fill-opacity="0.12" transform="rotate(39 1105.5 558.6)"/>
<ellipse cx="1111.1" cy="562.8" rx="4.6" ry="1.8" fill-opacity="0.14" transform="rotate(39 1111.1 562.8)"/>
<ellipse cx="1113.1" cy="563.8" rx="4.5" ry="1.7" fill-opacity="0.11" transform="rotate(39 1113.1 563.8)"/>
<ellipse cx="1118.8" cy="566.8" rx="2.1" ry="2.6" fill-opacity="0.12" transform="rotate(39 1118.8 566.8)"/>
<ellipse cx="1116.2" cy="567.0" rx="4.8" ry="2.7" fill-opacity="0.04" transform="rotate(41 1116.2 567.0)"/>
<ellipse cx="1123.3" cy="573.7" rx="3.7" ry="1.7" fill-opacity="0.13" transform="rotate(41 1123.3 573.7)"/>
<ellipse cx="1128.4" cy="577.6" rx="3.7" ry="2.0" fill-opacity="0.05" transform="rotate(41 1128.4 577.6)"/>
<ellipse cx="1134.9" cy="580.5" rx="3.6" ry="2.7" fill-opacity="0.14" transform="rotate(41 1134.9 580.5)"/>
<ellipse cx="1138.0" cy="585.0" rx="2.5" ry="2.4" fill-opacity="0.07" transform="rotate(41 1138.0 585.0)"/>
<ellipse cx="1141.5" cy="588.4" rx="4.5" ry="2.7" fill-opacity="0.05" transform="rotate(41 1141.5 588.4)"/>
<ellipse cx="1143.2" cy="589.1" rx="3.2" ry="3.1" fill-opacity="0.13" transform="rotate(41 1143.2 589.1)"/>
<ellipse cx="1148.3" cy="595.0" rx="4.7" ry="2.6" fill-opacity="0.05" transform="rotate(41 1148.3 595.0)"/>
<ellipse cx="1150.4" cy="596.0" rx="3.7" ry="2.2" fill-opacity="0.09" transform="rotate(41 1150.4 596.0)"/>
<ellipse cx="1155.9" cy="601.4" rx="2.1" ry="2.3" fill-opacity="0.07" transform="rotate(41 1155.9 601.4)"/>
<ellipse cx="1161.0" cy="605.7" rx="2.8" ry="2.0" fill-opacity="0.11" transform="rotate(41 1161.0 605.7)"/>
<ellipse cx="1163.2" cy="606.5" rx="4.9" ry="3.3" fill-opacity="0.09" transform="rotate(41 1163.2 606.5)"/>
<ellipse cx="1166.8" cy="606.1" rx="4.3" ry="2.6" fill-opacity="0.14" transform="rotate(41 1166.8 606.1)"/>
<ellipse cx="1170.1" cy="612.8" rx="4.6" ry="3.2" fill-opacity="0.13" transform="rotate(41 1170.1 612.8)"/>
<ellipse cx="1175.9" cy="616.2" rx="3.5" ry="2.6" fill-opacity="0.12" transform="rotate(41 1175.9 616.2)"/>
<ellipse cx="1179.8" cy="617.8" rx="3.0" ry="2.1" fill-opacity="0.03" transform="rotate(41 1179.8 617.8)"/>
<ellipse cx="1182.9" cy="623.6" rx="2.7" ry="2.1" fill-opacity="0.06" transform="rotate(56 1182.9 623.6)"/>
<ellipse cx="1183.9" cy="628.4" rx="3.3" ry="2.5" fill-opacity="0.08" transform="rotate(56 1183.9 628.4)"/>
<ellipse cx="1187.1" cy="630.7" rx="2.9" ry="2.8" fill-opacity="0.06" transform="rotate(56 1187.1 630.7)"/>
<ellipse cx="1190.9" cy="636.8" rx="3.8" ry="1.6" fill-opacity="0.12" transform="rotate(56 1190.9 636.8)"/>
<ellipse cx="1191.7" cy="634.6" rx="4.3" ry="2.3" fill-opacity="0.05" transform="rotate(56 1191.7 634.6)"/>
<ellipse cx="1194.8" cy="646.8" rx="2.8" ry="2.0" fill-opacity="0.06" transform="rotate(56 1194.8 646.8)"/>
<ellipse cx="1198.0" cy="646.5" rx="2.7" ry="2.2" fill-opacity="0.05" transform="rotate(56 1198.0 646.5)"/>
</g>
<g filter="url(#b1)">
<ellipse cx="1012.7" cy="412.3" rx="1.6" ry="1.4" fill="#0c0c0c" fill-opacity="0.8"/>
<ellipse cx="1022.2" cy="434.8" rx="1.6" ry="1.6" fill="#0c0c0c" fill-opacity="0.7"/>
<ellipse cx="994.4" cy="417.2" rx="2.2" ry="2" fill="#0c0c0c" fill-opacity="0.35"/>
<ellipse cx="984.6" cy="422.9" rx="2" ry="1.5" fill="#0c0c0c" fill-opacity="0.3"/>
<ellipse cx="976.9" cy="444.4" rx="1.3" ry="1.3" fill="#0c0c0c" fill-opacity="0.6"/>
<ellipse cx="963.8" cy="454.7" rx="1.2" ry="1.2" fill="#0c0c0c" fill-opacity="0.5"/>
<ellipse cx="906.1" cy="466.2" rx="1.6" ry="1.5" fill="#0c0c0c" fill-opacity="0.75"/>
<ellipse cx="951.9" cy="476.5" rx="1.6" ry="1.5" fill="#0c0c0c" fill-opacity="0.6"/>
<ellipse cx="969.1" cy="474.8" rx="2" ry="1.5" fill="#0c0c0c" fill-opacity="0.75"/>
<ellipse cx="976.1" cy="484.2" rx="2" ry="2.2" fill="#0c0c0c" fill-opacity="0.8"/>
<ellipse cx="982.5" cy="485" rx="1.8" ry="1.7" fill="#0c0c0c" fill-opacity="0.85"/>
<ellipse cx="1000.4" cy="498" rx="2.6" ry="2.2" fill="#0c0c0c" fill-opacity="0.85"/>
<ellipse cx="1000.9" cy="507" rx="1.6" ry="1.4" fill="#0c0c0c" fill-opacity="0.5"/>
<ellipse cx="993.9" cy="517.6" rx="1.3" ry="1.3" fill="#0c0c0c" fill-opacity="0.7"/>
<ellipse cx="975.6" cy="532.4" rx="1.1" ry="1.1" fill="#0c0c0c" fill-opacity="0.6"/>
<ellipse cx="1000.1" cy="536" rx="1.6" ry="2.8" fill="#0c0c0c" fill-opacity="0.85"/>
<ellipse cx="969" cy="541.3" rx="2.2" ry="2.8" fill="#0c0c0c" fill-opacity="0.3"/>
<ellipse cx="1006.6" cy="550.3" rx="3.6" ry="2.6" fill="#0c0c0c" fill-opacity="0.95"/>
<ellipse cx="1011.5" cy="544.1" rx="1.2" ry="1.2" fill="#0c0c0c" fill-opacity="0.6"/>
<ellipse cx="1009.9" cy="563.4" rx="1.2" ry="1.2" fill="#0c0c0c" fill-opacity="0.7"/>
<ellipse cx="1025.4" cy="563.9" rx="1.2" ry="1.2" fill="#0c0c0c" fill-opacity="0.6"/>
<ellipse cx="942.9" cy="562" rx="1.2" ry="1.2" fill="#0c0c0c" fill-opacity="0.35"/>
<ellipse cx="1036.4" cy="602" rx="3" ry="2" fill="#0c0c0c" fill-opacity="0.7"/>
<ellipse cx="1028.6" cy="581.5" rx="1.2" ry="1.2" fill="#0c0c0c" fill-opacity="0.5"/>
<ellipse cx="1034.8" cy="587.9" rx="1" ry="1" fill="#0c0c0c" fill-opacity="0.4"/>
<ellipse cx="1022.5" cy="572" rx="2.5" ry="1.5" fill="#0c0c0c" fill-opacity="0.3"/>
<ellipse cx="785" cy="772.6" rx="2" ry="1.7" fill="#0c0c0c" fill-opacity="0.9"/>
<ellipse cx="861.2" cy="760.6" rx="1" ry="1" fill="#0c0c0c" fill-opacity="0.7"/>
<ellipse cx="788" cy="751.2" rx="1" ry="1" fill="#0c0c0c" fill-opacity="0.6"/>
<ellipse cx="847" cy="800.7" rx="2" ry="1.2" fill="#0c0c0c" fill-opacity="0.8"/>
<ellipse cx="717" cy="137" rx="2.5" ry="2" fill="#0c0c0c" fill-opacity="0.3"/>
<ellipse cx="622" cy="222" rx="3" ry="2.5" fill="#0c0c0c" fill-opacity="0.3"/>
<ellipse cx="587" cy="268" rx="2" ry="1.5" fill="#0c0c0c" fill-opacity="0.3"/>
<ellipse cx="591" cy="568" rx="1.5" ry="1.5" fill="#0c0c0c" fill-opacity="0.3"/>
<ellipse cx="1015" cy="150" rx="1" ry="1" fill="#0c0c0c" fill-opacity="0.4"/>
</g>
<g fill="#121212" stroke="#f01010" stroke-width="1" stroke-linejoin="round">
<path d="M777.3 249.3 L783.3 250.4 L786.6 257.0 L789.0 265.2 L787.4 269.3 L780.0 271.7 L776.3 268.9 L775.2 261.9 L774.7 256.2 L776.3 251.3 Z" fill="#2a2a2a"/>
<path d="M832.1 348.1 L834.9 351.9 L834.9 360.8 L834.0 365.8 L836.2 371.5 L834.5 378.0 L833.6 384.6 L822.6 387.8 L818.5 382.9 L815.2 375.6 L816.5 365.8 L816.9 358.4 L821.0 354.6 L828.3 350.7 Z"/>
<path d="M930.7 419.9 L936.4 426.1 L940.5 432.7 L945.4 440.8 L942.9 449.0 L942.1 455.6 L945.4 460.8 L938.8 458.0 L932.3 456.4 L928.2 462.9 L920.8 463.4 L926.6 456.4 L921.7 452.3 L912.7 446.6 L904.5 443.3 L897.6 440.0 L900.4 434.6 L909.4 433.5 L917.6 432.7 L924.1 424.5 Z"/>
<path d="M1049.1 534.8 L1055.7 538.1 L1057.3 543.0 L1054.0 549.5 L1046.7 549.0 L1041.8 546.2 L1038.5 542.2 L1041.8 537.3 Z"/>
<path d="M693.0 594.0 L688.7 584.4 L685.6 576.0 L681.3 567.5 L672.9 561.2 L664.4 559.2 L656.0 561.7 L648.6 567.5 L643.8 576.0 L641.2 586.5 L639.0 597.1 L639.6 607.7 L643.3 616.1 L649.6 624.6 L657.0 629.4 L664.9 629.4 L661.2 624.6 L654.9 618.3 L649.6 609.8 L647.7 601.3 L647.7 592.9 L650.1 585.5 L654.9 579.1 L660.2 573.8 L666.5 573.0 L671.8 575.4 L676.0 581.2 L680.3 587.6 L684.5 591.8 L689.8 595.5 Z"/>
<path d="M947.4 574.2 L950.7 578.6 L948.2 585.1 L944.9 590.8 L942.8 596.6 L937.6 597.4 L929.4 597.7 L924.5 593.3 L928.6 588.4 L936.8 584.3 L941.7 580.2 L944.9 575.3 Z"/>
<path d="M1005.6 780.2 L1007.3 782.3 L1009.6 782.3 L1010.8 781.7 L1014.2 781.9 L1016.2 784.4 L1014.2 786.3 L1010.8 788.1 L1008.4 790.1 L1005.6 790.1 L1002.7 791.3 L998.1 791.5 L995.8 792.7 L993.5 792.7 L990.6 795.2 L985.4 795.2 L984.5 792.7 L986.5 791.3 L991.1 790.6 L994.6 788.1 L998.1 787.5 L1000.4 784.8 L1003.3 784.0 Z"/>
<path d="M1022.3 712.5 L1028.1 714.2 L1032.7 712.1 L1041.9 713.6 L1047.7 718.8 L1054.6 725.8 L1058.0 733.3 L1064.4 733.8 L1065.5 738.4 L1062.7 743.1 L1054.6 745.4 L1050.0 750.0 L1046.5 749.4 L1044.8 744.2 L1044.2 737.3 L1041.3 737.3 L1038.4 741.9 L1034.4 744.2 L1030.4 741.3 L1026.9 739.6 L1025.8 744.2 L1022.9 748.8 L1017.7 751.7 L1014.2 747.7 L1011.9 740.8 L1010.4 735.0 L1014.8 732.9 L1021.1 733.8 L1019.4 728.1 L1015.9 722.3 L1017.1 716.0 Z" fill="#8e8e8e"/>
<path d="M1022.3 713.6 L1028.1 714.8 L1032.7 713.1 L1041.9 714.2 L1047.7 719.4 L1054.0 726.3 L1057.5 733.8 L1063.8 734.4 L1064.4 738.4 L1062.1 742.5 L1054.6 744.8 L1049.4 748.8 L1047.1 748.3 L1045.9 743.6 L1045.1 736.7 L1040.7 736.1 L1037.9 740.8 L1034.4 742.5 L1030.4 738.4 L1027.5 735.6 L1024.0 733.3 L1020.6 728.1 L1017.7 722.3 L1018.3 716.5 Z" stroke="none"/><path d="M1013.6 734.4 L1020.0 735.6 L1024.0 739.6 L1024.6 744.2 L1021.1 748.8 L1017.1 750.6 L1014.8 746.5 L1013.1 740.8 Z" stroke="none"/>
</g>
<path d="M814 187.8L824.8 193.7" stroke="#222" stroke-opacity=".8" stroke-width="2.6" stroke-linecap="round" filter="url(#b1)"/>
</g></svg>
<div class="" style="left:196px;top:72px;width:1399px;height:738px;box-shadow:inset 1px 1px 0 0 #a0a0a0,inset -1px -1px 0 0 #fff,inset 2px 2px 0 0 #696969,inset -2px -2px 0 0 #e3eefa"></div>
<div class="" style="left:196px;top:821px;width:1055px;height:203px;background:#fff;border:1px solid #828790"></div>
<div class="" style="left:257px;top:823px;width:1px;height:24px;background:#e5e5e5"></div>
<div class="" style="left:337px;top:823px;width:1px;height:24px;background:#e5e5e5"></div>
<div class="" style="left:431px;top:823px;width:1px;height:24px;background:#e5e5e5"></div>
<div class="" style="left:501px;top:823px;width:1px;height:24px;background:#e5e5e5"></div>
<div class="" style="left:571px;top:823px;width:1px;height:24px;background:#e5e5e5"></div>
<div class="" style="left:641px;top:823px;width:1px;height:24px;background:#e5e5e5"></div>
<div class="" style="left:687px;top:823px;width:1px;height:24px;background:#e5e5e5"></div>
<div class="" style="left:857px;top:823px;width:1px;height:24px;background:#e5e5e5"></div>
<div class="" style="left:942px;top:823px;width:1px;height:24px;background:#e5e5e5"></div>
<div class="t " style="left:198.5px;width:59px;text-align:center;top:828px;line-height:16px;height:16px;">编号</div>
<div class="t " style="left:131.5px;width:200px;text-align:right;top:828px;line-height:16px;height:16px;">周长<span class="m"><span style="display:inline-block;width:12px;letter-spacing:0;text-align:center">μ</span>m</span></div>
<div class="t " style="left:225.5px;width:200px;text-align:right;top:828px;line-height:16px;height:16px;">面积<span class="m"><span style="display:inline-block;width:12px;letter-spacing:0;text-align:center">μ</span>m2</span></div>
<div class="t " style="left:295.5px;width:200px;text-align:right;top:828px;line-height:16px;height:16px;">长轴<span class="m"><span style="display:inline-block;width:12px;letter-spacing:0;text-align:center">μ</span>m</span></div>
<div class="t " style="left:365.5px;width:200px;text-align:right;top:828px;line-height:16px;height:16px;">短轴<span class="m"><span style="display:inline-block;width:12px;letter-spacing:0;text-align:center">μ</span>m</span></div>
<div class="t " style="left:435.5px;width:200px;text-align:right;top:828px;line-height:16px;height:16px;">直径<span class="m"><span style="display:inline-block;width:12px;letter-spacing:0;text-align:center">μ</span>m</span></div>
<div class="t " style="left:481.5px;width:200px;text-align:right;top:828px;line-height:16px;height:16px;">圆度</div>
<div class="t " style="left:688.5px;width:169px;text-align:center;top:828px;line-height:16px;height:16px;">类型</div>
<div class="t " style="left:858.5px;width:84px;text-align:center;top:828px;line-height:16px;height:16px;">坐标</div>
<div class="" style="left:198px;top:847px;width:745px;height:21px;background:#c80000"></div>
<div class="t m w" style="left:221px;width:30px;text-align:center;top:849.5px;line-height:16px;height:16px;">1</div>
<div class="t m w" style="left:131.5px;width:200px;text-align:right;top:849.5px;line-height:16px;height:16px;">234.18</div>
<div class="t m w" style="left:225.5px;width:200px;text-align:right;top:849.5px;line-height:16px;height:16px;">1865.31</div>
<div class="t m w" style="left:295.5px;width:200px;text-align:right;top:849.5px;line-height:16px;height:16px;">63.12</div>
<div class="t m w" style="left:365.5px;width:200px;text-align:right;top:849.5px;line-height:16px;height:16px;">47.34</div>
<div class="t m w" style="left:435.5px;width:200px;text-align:right;top:849.5px;line-height:16px;height:16px;">48.73</div>
<div class="t m w" style="left:481.5px;width:200px;text-align:right;top:849.5px;line-height:16px;height:16px;">0.427</div>
<div class="t w" style="left:688.5px;width:169px;text-align:center;top:850.5px;line-height:16px;height:16px;">非金属颗粒</div>
<div class="t m w" style="left:857.5px;width:84px;text-align:center;top:849.5px;line-height:16px;height:16px;">411,60</div>
<div class="t m " style="left:221px;width:30px;text-align:center;top:870.5px;line-height:16px;height:16px;">2</div>
<div class="t m " style="left:131.5px;width:200px;text-align:right;top:870.5px;line-height:16px;height:16px;">313.40</div>
<div class="t m " style="left:225.5px;width:200px;text-align:right;top:870.5px;line-height:16px;height:16px;">1702.04</div>
<div class="t m " style="left:295.5px;width:200px;text-align:right;top:870.5px;line-height:16px;height:16px;">82.04</div>
<div class="t m " style="left:365.5px;width:200px;text-align:right;top:870.5px;line-height:16px;height:16px;">62.21</div>
<div class="t m " style="left:435.5px;width:200px;text-align:right;top:870.5px;line-height:16px;height:16px;">46.55</div>
<div class="t m " style="left:481.5px;width:200px;text-align:right;top:870.5px;line-height:16px;height:16px;">0.218</div>
<div class="t " style="left:688.5px;width:169px;text-align:center;top:871.5px;line-height:16px;height:16px;">非金属颗粒</div>
<div class="t m " style="left:857.5px;width:84px;text-align:center;top:870.5px;line-height:16px;height:16px;">110,171</div>
<div class="t m " style="left:221px;width:30px;text-align:center;top:891.5px;line-height:16px;height:16px;">3</div>
<div class="t m " style="left:131.5px;width:200px;text-align:right;top:891.5px;line-height:16px;height:16px;">201.22</div>
<div class="t m " style="left:225.5px;width:200px;text-align:right;top:891.5px;line-height:16px;height:16px;">1532.65</div>
<div class="t m " style="left:295.5px;width:200px;text-align:right;top:891.5px;line-height:16px;height:16px;">60.78</div>
<div class="t m " style="left:365.5px;width:200px;text-align:right;top:891.5px;line-height:16px;height:16px;">51.14</div>
<div class="t m " style="left:435.5px;width:200px;text-align:right;top:891.5px;line-height:16px;height:16px;">44.18</div>
<div class="t m " style="left:481.5px;width:200px;text-align:right;top:891.5px;line-height:16px;height:16px;">0.476</div>
<div class="t " style="left:688.5px;width:169px;text-align:center;top:892.5px;line-height:16px;height:16px;">非金属颗粒</div>
<div class="t m " style="left:857.5px;width:84px;text-align:center;top:891.5px;line-height:16px;height:16px;">316,295</div>
<div class="t m " style="left:221px;width:30px;text-align:center;top:912.5px;line-height:16px;height:16px;">4</div>
<div class="t m " style="left:131.5px;width:200px;text-align:right;top:912.5px;line-height:16px;height:16px;">124.65</div>
<div class="t m " style="left:225.5px;width:200px;text-align:right;top:912.5px;line-height:16px;height:16px;">881.63</div>
<div class="t m " style="left:295.5px;width:200px;text-align:right;top:912.5px;line-height:16px;height:16px;">47.12</div>
<div class="t m " style="left:365.5px;width:200px;text-align:right;top:912.5px;line-height:16px;height:16px;">26.68</div>
<div class="t m " style="left:435.5px;width:200px;text-align:right;top:912.5px;line-height:16px;height:16px;">33.50</div>
<div class="t m " style="left:481.5px;width:200px;text-align:right;top:912.5px;line-height:16px;height:16px;">0.713</div>
<div class="t " style="left:688.5px;width:169px;text-align:center;top:913.5px;line-height:16px;height:16px;">非金属颗粒</div>
<div class="t m " style="left:857.5px;width:84px;text-align:center;top:912.5px;line-height:16px;height:16px;">239,355</div>
<div class="t m " style="left:221px;width:30px;text-align:center;top:933.5px;line-height:16px;height:16px;">5</div>
<div class="t m " style="left:131.5px;width:200px;text-align:right;top:933.5px;line-height:16px;height:16px;">94.55</div>
<div class="t m " style="left:225.5px;width:200px;text-align:right;top:933.5px;line-height:16px;height:16px;">442.86</div>
<div class="t m " style="left:295.5px;width:200px;text-align:right;top:933.5px;line-height:16px;height:16px;">36.06</div>
<div class="t m " style="left:365.5px;width:200px;text-align:right;top:933.5px;line-height:16px;height:16px;">20.21</div>
<div class="t m " style="left:435.5px;width:200px;text-align:right;top:933.5px;line-height:16px;height:16px;">23.75</div>
<div class="t m " style="left:481.5px;width:200px;text-align:right;top:933.5px;line-height:16px;height:16px;">0.623</div>
<div class="t " style="left:688.5px;width:169px;text-align:center;top:934.5px;line-height:16px;height:16px;">非金属颗粒</div>
<div class="t m " style="left:857.5px;width:84px;text-align:center;top:933.5px;line-height:16px;height:16px;">329,178</div>
<div class="t m " style="left:221px;width:30px;text-align:center;top:954.5px;line-height:16px;height:16px;">6</div>
<div class="t m " style="left:131.5px;width:200px;text-align:right;top:954.5px;line-height:16px;height:16px;">71.98</div>
<div class="t m " style="left:225.5px;width:200px;text-align:right;top:954.5px;line-height:16px;height:16px;">351.02</div>
<div class="t m " style="left:295.5px;width:200px;text-align:right;top:954.5px;line-height:16px;height:16px;">26.69</div>
<div class="t m " style="left:365.5px;width:200px;text-align:right;top:954.5px;line-height:16px;height:16px;">15.68</div>
<div class="t m " style="left:435.5px;width:200px;text-align:right;top:954.5px;line-height:16px;height:16px;">21.14</div>
<div class="t m " style="left:481.5px;width:200px;text-align:right;top:954.5px;line-height:16px;height:16px;">0.851</div>
<div class="t " style="left:688.5px;width:169px;text-align:center;top:955.5px;line-height:16px;height:16px;">非金属颗粒</div>
<div class="t m " style="left:857.5px;width:84px;text-align:center;top:954.5px;line-height:16px;height:16px;">203,442</div>
<div class="t m " style="left:221px;width:30px;text-align:center;top:975.5px;line-height:16px;height:16px;">7</div>
<div class="t m " style="left:131.5px;width:200px;text-align:right;top:975.5px;line-height:16px;height:16px;">67.79</div>
<div class="t m " style="left:225.5px;width:200px;text-align:right;top:975.5px;line-height:16px;height:16px;">312.24</div>
<div class="t m " style="left:295.5px;width:200px;text-align:right;top:975.5px;line-height:16px;height:16px;">23.04</div>
<div class="t m " style="left:365.5px;width:200px;text-align:right;top:975.5px;line-height:16px;height:16px;">18.96</div>
<div class="t m " style="left:435.5px;width:200px;text-align:right;top:975.5px;line-height:16px;height:16px;">19.94</div>
<div class="t m " style="left:481.5px;width:200px;text-align:right;top:975.5px;line-height:16px;height:16px;">0.854</div>
<div class="t " style="left:688.5px;width:169px;text-align:center;top:976.5px;line-height:16px;height:16px;">非金属颗粒</div>
<div class="t m " style="left:857.5px;width:84px;text-align:center;top:975.5px;line-height:16px;height:16px;">419,213</div>
<div class="t m " style="left:221px;width:30px;text-align:center;top:996.5px;line-height:16px;height:16px;">8</div>
<div class="t m " style="left:131.5px;width:200px;text-align:right;top:996.5px;line-height:16px;height:16px;">91.00</div>
<div class="t m " style="left:225.5px;width:200px;text-align:right;top:996.5px;line-height:16px;height:16px;">279.59</div>
<div class="t m " style="left:295.5px;width:200px;text-align:right;top:996.5px;line-height:16px;height:16px;">37.50</div>
<div class="t m " style="left:365.5px;width:200px;text-align:right;top:996.5px;line-height:16px;height:16px;">11.76</div>
<div class="t m " style="left:435.5px;width:200px;text-align:right;top:996.5px;line-height:16px;height:16px;">18.87</div>
<div class="t m " style="left:481.5px;width:200px;text-align:right;top:996.5px;line-height:16px;height:16px;">0.424</div>
<div class="t " style="left:688.5px;width:169px;text-align:center;top:997.5px;line-height:16px;height:16px;">非金属颗粒</div>
<div class="t m " style="left:857.5px;width:84px;text-align:center;top:996.5px;line-height:16px;height:16px;">380,15</div>
<div class="gb" style="left:1606px;top:78px;width:285px;height:43px;"></div>
<div class="t " style="left:1628.5px;width:240px;text-align:center;top:71px;line-height:16px;height:16px;"><span class="cap" style="position:static;padding:0 2px">当前图像</span></div>
<div class="sunk" style="left:1611px;top:93px;width:276px;height:25px;background:#ffffd2"></div>
<div class="t " style="left:1618.5px;width:260px;text-align:center;top:98px;line-height:16px;height:16px;"><span class="m">592x592 1(MB) RGB</span>模式</div>
<div class="gb" style="left:1606px;top:131px;width:285px;height:46px;"></div>
<div class="t " style="left:1628.5px;width:240px;text-align:center;top:124px;line-height:16px;height:16px;"><span class="cap" style="position:static;padding:0 2px">当前标定值<span class="m">(</span>微米<span class="m">/</span>像素<span class="m">)</span></span></div>
<div class="sunk" style="left:1611px;top:147px;width:276px;height:25px;background:#d2ffd2"></div>
<div class="t m" style="left:1618.5px;width:260px;text-align:center;top:151px;line-height:16px;height:16px;white-space:pre">X:1.429&nbsp;&nbsp;&nbsp;&nbsp;Y:1.429</div>
<div class="bevel" style="left:1606px;top:184px;width:285px;height:343px;"></div>
<div class="gb" style="left:1611px;top:195px;width:275px;height:326px;"></div>
<div class="t " style="left:1628.5px;width:240px;text-align:center;top:189px;line-height:16px;height:16px;"><span class="cap" style="position:static;padding:0 2px">目标搜索</span></div>
<div class="cb" style="left:1624px;top:219px;width:13px;height:13px;"><svg width="11" height="11" viewBox="0 0 11 11" style="left:0;top:0"><path d="M1.7 5.4 L4.4 8.1 L9.6 2.4" fill="none" stroke="#3c3c3c" stroke-width="1.5"/></svg></div>
<div class="t " style="left:1640px;top:219px;line-height:16px;height:16px;">黑色目标</div>
<div class="" style="left:1726px;top:221px;width:13px;height:13px;background:#f00"></div>
<div class="cb" style="left:1757px;top:219px;width:13px;height:13px;"><svg width="11" height="11" viewBox="0 0 11 11" style="left:0;top:0"><path d="M1.7 5.4 L4.4 8.1 L9.6 2.4" fill="none" stroke="#3c3c3c" stroke-width="1.5"/></svg></div>
<div class="t " style="left:1773px;top:219px;line-height:16px;height:16px;">白色目标</div>
<div class="" style="left:1858px;top:220px;width:13px;height:12px;background:#0ff"></div>
<div class="t " style="left:1638.5px;top:251px;line-height:16px;height:16px;">黑阈值</div>
<div class="edit" style="left:1678px;top:245px;width:38px;height:27px;"></div>
<div class="t s" style="left:1656px;width:80px;text-align:center;top:245.8px;line-height:16px;height:16px;">110</div>
<div class="sp au" style="left:1718px;top:246px;width:23px;height:12px;"></div>
<div class="sp ad" style="left:1718px;top:259px;width:23px;height:12px;"></div>
<div class="t " style="left:1766px;top:251px;line-height:16px;height:16px;">白阈值</div>
<div class="edit" style="left:1805px;top:245px;width:38px;height:27px;"></div>
<div class="t s" style="left:1784px;width:80px;text-align:center;top:245.8px;line-height:16px;height:16px;">200</div>
<div class="sp au" style="left:1845px;top:246px;width:23px;height:12px;"></div>
<div class="sp ad" style="left:1845px;top:259px;width:23px;height:12px;"></div>
<div class="rb on" style="left:1646px;top:283px;width:13px;height:13px;"></div>
<div class="t " style="left:1662px;top:283px;line-height:16px;height:16px;">面积过滤</div>
<div class="rb" style="left:1757px;top:283px;width:13px;height:13px;"></div>
<div class="t " style="left:1773px;top:283px;line-height:16px;height:16px;">长轴过滤</div>
<div class="t " style="left:1646px;top:315px;line-height:16px;height:16px;">最小面积</div>
<div class="edit" style="left:1698px;top:308px;width:125px;height:27px;"></div>
<div class="t s" style="left:1720px;width:80px;text-align:center;top:308.8px;line-height:16px;height:16px;">80</div>
<div class="sf" style="left:1822px;top:309px;width:22px;height:26px;"><div class="sh au2" style="top:0;height:11px"></div><div class="sh ad2" style="top:12px;height:12px"></div></div>
<div class="t m" style="left:1846.5px;top:315px;line-height:16px;height:16px;letter-spacing:-0.2px"><span style="display:inline-block;width:8px;text-align:left">μ</span>m2</div>
<div class="t " style="left:1646px;top:348px;line-height:16px;height:16px;">最大面积</div>
<div class="edit" style="left:1698px;top:341px;width:125px;height:27px;"></div>
<div class="t s" style="left:1720px;width:80px;text-align:center;top:341.8px;line-height:16px;height:16px;">10000</div>
<div class="sf" style="left:1822px;top:342px;width:22px;height:26px;"><div class="sh au2" style="top:0;height:11px"></div><div class="sh ad2" style="top:12px;height:12px"></div></div>
<div class="t m" style="left:1846.5px;top:348px;line-height:16px;height:16px;letter-spacing:-0.2px"><span style="display:inline-block;width:8px;text-align:left">μ</span>m2</div>
<div class="t dis" style="left:1646px;top:381px;line-height:16px;height:16px;">最小长轴</div>
<div class="edit" style="left:1698px;top:374px;width:125px;height:27px;"></div>
<div class="t s" style="left:1720px;width:80px;text-align:center;top:374.8px;line-height:16px;height:16px;">20</div>
<div class="sf" style="left:1822px;top:375px;width:22px;height:26px;"><div class="sh au2" style="top:0;height:11px"></div><div class="sh ad2" style="top:12px;height:12px"></div></div>
<div class="t m" style="left:1846.5px;top:378.5px;line-height:16px;height:16px;letter-spacing:-0.2px"><span style="display:inline-block;width:8px;text-align:left">μ</span>m</div>
<div class="t dis" style="left:1646px;top:414px;line-height:16px;height:16px;">最大长轴</div>
<div class="edit" style="left:1698px;top:407px;width:125px;height:27px;"></div>
<div class="t s" style="left:1720px;width:80px;text-align:center;top:407.8px;line-height:16px;height:16px;">400</div>
<div class="sf" style="left:1822px;top:408px;width:22px;height:26px;"><div class="sh au2" style="top:0;height:11px"></div><div class="sh ad2" style="top:12px;height:12px"></div></div>
<div class="t m" style="left:1846.5px;top:410.5px;line-height:16px;height:16px;letter-spacing:-0.2px"><span style="display:inline-block;width:8px;text-align:left">μ</span>m</div>
<div class="sunk" style="left:1617px;top:443px;width:265px;height:40px;"></div>
<div class="t " style="left:1652px;width:200px;text-align:center;top:456px;line-height:16px;height:16px;">总数<span class="m">8&nbsp;&nbsp;</span>机时<span class="m">0</span><span style="display:inline-block;width:12px;text-align:left">″</span></div>
<div class="t " style="left:1631px;top:494px;line-height:16px;height:16px;">黑</div>
<div class="sunk" style="left:1650px;top:489px;width:73px;height:25px;"></div>
<div class="t m" style="left:1665.5px;width:40px;text-align:center;top:493px;line-height:16px;height:16px;">8</div>
<div class="t " style="left:1735px;top:494px;line-height:16px;height:16px;">个</div>
<div class="t " style="left:1762px;top:494px;line-height:16px;height:16px;">白</div>
<div class="sunk" style="left:1782px;top:489px;width:70px;height:25px;"></div>
<div class="t m" style="left:1796px;width:40px;text-align:center;top:493px;line-height:16px;height:16px;">0</div>
<div class="t " style="left:1859px;top:494px;line-height:16px;height:16px;">个</div>
<div class="bevel" style="left:1606px;top:534px;width:285px;height:98px;"></div>
<div class="gb" style="left:1611px;top:545px;width:275px;height:81px;"></div>
<div class="t " style="left:1628.5px;width:240px;text-align:center;top:538.5px;line-height:16px;height:16px;"><span class="cap" style="position:static;padding:0 2px">选区</span></div>
<div class="t " style="left:1621px;top:568px;line-height:16px;height:16px;">半径</div>
<div class="sunk" style="left:1655px;top:563px;width:64px;height:25px;"></div>
<div class="t m" style="left:1723px;top:568px;line-height:16px;height:16px;">cm</div>
<div class="t " style="left:1753px;top:568px;line-height:16px;height:16px;">面积</div>
<div class="sunk" style="left:1787px;top:563px;width:65px;height:25px;"></div>
<div class="t m" style="left:1857px;top:568px;line-height:16px;height:16px;">cm2</div>
<div class="cb" style="left:1637px;top:599px;width:13px;height:13px;"></div>
<div class="t " style="left:1653.5px;top:599px;line-height:16px;height:16px;">使用</div>
<div class="cb" style="left:1725px;top:599px;width:13px;height:13px;"></div>
<div class="t " style="left:1741px;top:599px;line-height:16px;height:16px;">调节</div>
<div class="btn" style="left:1813px;top:595px;width:60px;height:22px;"></div>
<div class="t " style="left:1813px;width:60px;text-align:center;top:599px;line-height:16px;height:16px;">默认</div>
<div class="t " style="left:1623px;top:656px;line-height:16px;height:16px;">拼图模式</div>
<div class="rb on" style="left:1687px;top:656px;width:13px;height:13px;"></div>
<div class="t " style="left:1703px;top:656px;line-height:16px;height:16px;">索引</div>
<div class="rb" style="left:1748px;top:656px;width:13px;height:13px;"></div>
<div class="t m" style="left:1764px;top:655px;line-height:16px;height:16px;">RGB</div>
<div class="bevel" style="left:1606px;top:687px;width:285px;height:137px;"></div>
<div class="gb" style="left:1611px;top:698px;width:275px;height:120px;"></div>
<div class="t " style="left:1628.5px;width:240px;text-align:center;top:691.5px;line-height:16px;height:16px;"><span class="cap" style="position:static;padding:0 2px">图像分析</span></div>
<div class="btn" style="left:1622px;top:721px;width:90px;height:38px;"></div>
<div class="t " style="left:1622px;width:90px;text-align:center;top:732.5px;line-height:16px;height:16px;">载入图像</div>
<div class="btnf" style="left:1718px;top:721px;width:159px;height:38px;"></div>
<div class="t " style="left:1722.5px;width:150px;text-align:center;top:733px;line-height:16px;height:16px;">搜索</div>
<div class="btn" style="left:1622px;top:767px;width:90px;height:38px;"></div>
<div class="t " style="left:1622px;width:90px;text-align:center;top:778.5px;line-height:16px;height:16px;">载入样图</div>
<div class="btn" style="left:1718px;top:767px;width:159px;height:38px;"></div>
<div class="t " style="left:1722.5px;width:150px;text-align:center;top:779px;line-height:16px;height:16px;">搜索最大颗粒图像</div>
<div class="gb" style="left:1606px;top:839px;width:285px;height:149px;"></div>
<div class="t " style="left:1628.5px;width:240px;text-align:center;top:832.5px;line-height:16px;height:16px;"><span class="cap" style="position:static;padding:0 2px">显示</span></div>
<div class="btn" style="left:1633px;top:849px;width:30px;height:16px;box-shadow:0 0 0 1px #e8f0f8"></div>
<div class="t " style="left:1633px;width:30px;text-align:center;top:850px;line-height:16px;height:16px;">原图</div>
<div class="" style="left:1614px;top:866px;width:18px;height:18px;background:linear-gradient(#d2d2d2,#bdbdbd);box-shadow:inset 1px 1px 0 #fff,inset -1px -1px 0 #000,inset -2px -2px 0 #808080"><svg width="18" height="18" viewBox="0 0 18 18" style="left:0;top:0"><circle cx="8" cy="7.5" r="5.2" fill="none" stroke="#000" stroke-width="1.1"/><path d="M3.3 5.4A5.2 5.2 0 0 1 6.6 2.5" stroke="#0ff" stroke-width="1.3" fill="none"/><path d="M9.4 12.5A5.2 5.2 0 0 0 12.7 9.6" stroke="#0ff" stroke-width="1.3" fill="none"/><path d="M5.5 7.5H10.5M8 5V10" stroke="#000" stroke-width="1.1" fill="none"/><path d="M12 11.2L15 14.2" stroke="#000" stroke-width="2.2" stroke-linecap="round"/></svg></div>
<div class="" style="left:1665px;top:866px;width:18px;height:18px;background:linear-gradient(#d2d2d2,#bdbdbd);box-shadow:inset 1px 1px 0 #fff,inset -1px -1px 0 #000,inset -2px -2px 0 #808080"><svg width="18" height="18" viewBox="0 0 18 18" style="left:0;top:0"><circle cx="8" cy="7.5" r="5.2" fill="none" stroke="#000" stroke-width="1.1"/><path d="M3.3 5.4A5.2 5.2 0 0 1 6.6 2.5" stroke="#0ff" stroke-width="1.3" fill="none"/><path d="M9.4 12.5A5.2 5.2 0 0 0 12.7 9.6" stroke="#0ff" stroke-width="1.3" fill="none"/><path d="M5.5 7.5H10.5" stroke="#000" stroke-width="1.1" fill="none"/><path d="M12 11.2L15 14.2" stroke="#000" stroke-width="2.2" stroke-linecap="round"/></svg></div>
<div class="" style="left:1632px;top:866px;width:32px;height:18px;background:#f0f0f0;box-shadow:inset 1px 1px 0 #808080,inset 2px 2px 0 #a0a0a0,inset -1px -1px 0 #fff"></div>
<div class="t m" style="left:1632.5px;width:32px;text-align:center;top:867.5px;line-height:16px;height:16px;">123%</div>
<div class="btnf" style="left:1633px;top:885px;width:30px;height:16px;box-shadow:0 0 0 1px #e8f0f8"></div>
<div class="t " style="left:1633px;width:30px;text-align:center;top:886px;line-height:16px;height:16px;">充满</div>
<div class="cb" style="left:1777px;top:853px;width:13px;height:13px;"><svg width="11" height="11" viewBox="0 0 11 11" style="left:0;top:0"><path d="M1.7 5.4 L4.4 8.1 L9.6 2.4" fill="none" stroke="#3c3c3c" stroke-width="1.5"/></svg></div>
<div class="t " style="left:1793px;top:853px;line-height:16px;height:16px;">数据列表</div>
<div class="btn" style="left:1778px;top:874px;width:95px;height:34px;"></div>
<div class="t " style="left:1778px;width:95px;text-align:center;top:883.5px;line-height:16px;height:16px;">显示增强</div>
<div class="t " style="left:1642.5px;top:928px;line-height:16px;height:16px;">放缩步进</div>
<div class="edit" style="left:1698px;top:923px;width:34px;height:25px;"></div>
<div class="t s" style="left:1674px;width:80px;text-align:center;top:923.8px;line-height:16px;height:16px;">2</div>
<div class="btn" style="left:1686px;top:953px;width:86px;height:34px;"></div>
<div class="t " style="left:1686px;width:86px;text-align:center;top:962.5px;line-height:16px;height:16px;">颗粒融合</div>
<div class="btn" style="left:1778px;top:950px;width:95px;height:34px;"></div>
<div class="t " style="left:1778px;width:95px;text-align:center;top:959.5px;line-height:16px;height:16px;">几何测量</div>
<div class="btn" style="left:1620px;top:990px;width:58px;height:34px;"></div>
<div class="t " style="left:1620px;width:58px;text-align:center;top:999.5px;line-height:16px;height:16px;">存图</div>
<div class="btn" style="left:1683px;top:990px;width:58px;height:34px;"></div>
<div class="t " style="left:1683px;width:58px;text-align:center;top:999.5px;line-height:16px;height:16px;">报告</div>
<div class="btn" style="left:1748px;top:990px;width:57px;height:34px;"></div>
<div class="t " style="left:1748px;width:57px;text-align:center;top:999.5px;line-height:16px;height:16px;">表格</div>
<div class="btnf" style="left:1815px;top:990px;width:58px;height:34px;"></div>
<div class="t " style="left:1815px;width:58px;text-align:center;top:999.5px;line-height:16px;height:16px;">清除</div>
<div class="" style="left:1362px;top:867px;width:194px;height:83px;background:#f0f0f0"></div>
<div class="" style="left:1365px;top:870px;width:188px;height:77px;border:1px solid #fff"></div>
<div class="t " style="left:1370px;top:878px;line-height:16px;height:16px;">点数</div>
<div class="" style="left:1397px;top:875px;width:18px;height:20px;background:#fff;border:1px solid #7a7a7a"></div>
<div class="t s" style="left:1397px;width:18px;text-align:center;top:876.2px;line-height:16px;height:16px;">10</div>
<div class="sp au" style="left:1417px;top:876px;width:15px;height:9px;box-shadow:none"></div>
<div class="sp ad" style="left:1417px;top:885px;width:15px;height:9px;box-shadow:none"></div>
<div class="t " style="left:1445.5px;top:878px;line-height:16px;height:16px;">插值</div>
<div class="" style="left:1473px;top:875px;width:77px;height:20px;background:#e1e1e1;border:1px solid #adadad"></div>
<div class="t " style="left:1477px;top:878.5px;line-height:16px;height:16px;">样条曲线</div>
<div style="left:1537px;top:883px"><svg style="left:0;top:0" width="9" height="6" viewBox="0 0 9 6"><path d="M0.5 0.8L4.5 4.8L8.5 0.8" fill="none" stroke="#444" stroke-width="1"/></svg></div>
<div class="t " style="left:1370px;top:903px;line-height:16px;height:16px;">线宽</div>
<div class="" style="left:1397px;top:900px;width:18px;height:20px;background:#fff;border:1px solid #7a7a7a"></div>
<div class="t s" style="left:1397px;width:18px;text-align:center;top:901.2px;line-height:16px;height:16px;">1</div>
<div class="sp au" style="left:1417px;top:901px;width:15px;height:9px;box-shadow:none"></div>
<div class="sp ad" style="left:1417px;top:910px;width:15px;height:9px;box-shadow:none"></div>
<div class="t " style="left:1445.5px;top:902px;line-height:16px;height:16px;">颜色</div>
<div class="" style="left:1473px;top:902px;width:17px;height:12px;border:1px solid #a0a0a0;background:#f0f0f0"></div>
<div class="" style="left:1475px;top:904px;width:13px;height:8px;background:#008000"></div>
<div class="" style="left:1493px;top:899px;width:57px;height:20px;background:#fff;border:1px solid #7a7a7a"></div>
<div class="t " style="left:1496px;top:902px;line-height:16px;height:16px;">暗绿</div>
<div style="left:1537px;top:907px"><svg style="left:0;top:0" width="9" height="6" viewBox="0 0 9 6"><path d="M0.5 0.8L4.5 4.8L8.5 0.8" fill="none" stroke="#444" stroke-width="1"/></svg></div>
<div class="cb" style="left:1370px;top:927px;width:13px;height:13px;"><svg width="11" height="11" viewBox="0 0 11 11" style="left:0;top:0"><path d="M1.7 5.4 L4.4 8.1 L9.6 2.4" fill="none" stroke="#3c3c3c" stroke-width="1.5"/></svg></div>
<div class="t " style="left:1386px;top:927px;line-height:16px;height:16px;">样点</div>
<div class="btnf" style="left:1494px;top:924px;width:33px;height:19px;"></div>
<div class="t " style="left:1494px;width:33px;text-align:center;top:926.5px;line-height:16px;height:16px;">放弃</div>
<div class="btn" style="left:1530px;top:924px;width:19px;height:19px;"></div>
<div class="t s" style="left:1529px;width:19px;text-align:center;top:925px;line-height:16px;height:16px;font-weight:bold;font-size:11px">?</div>
</div></body></html>
